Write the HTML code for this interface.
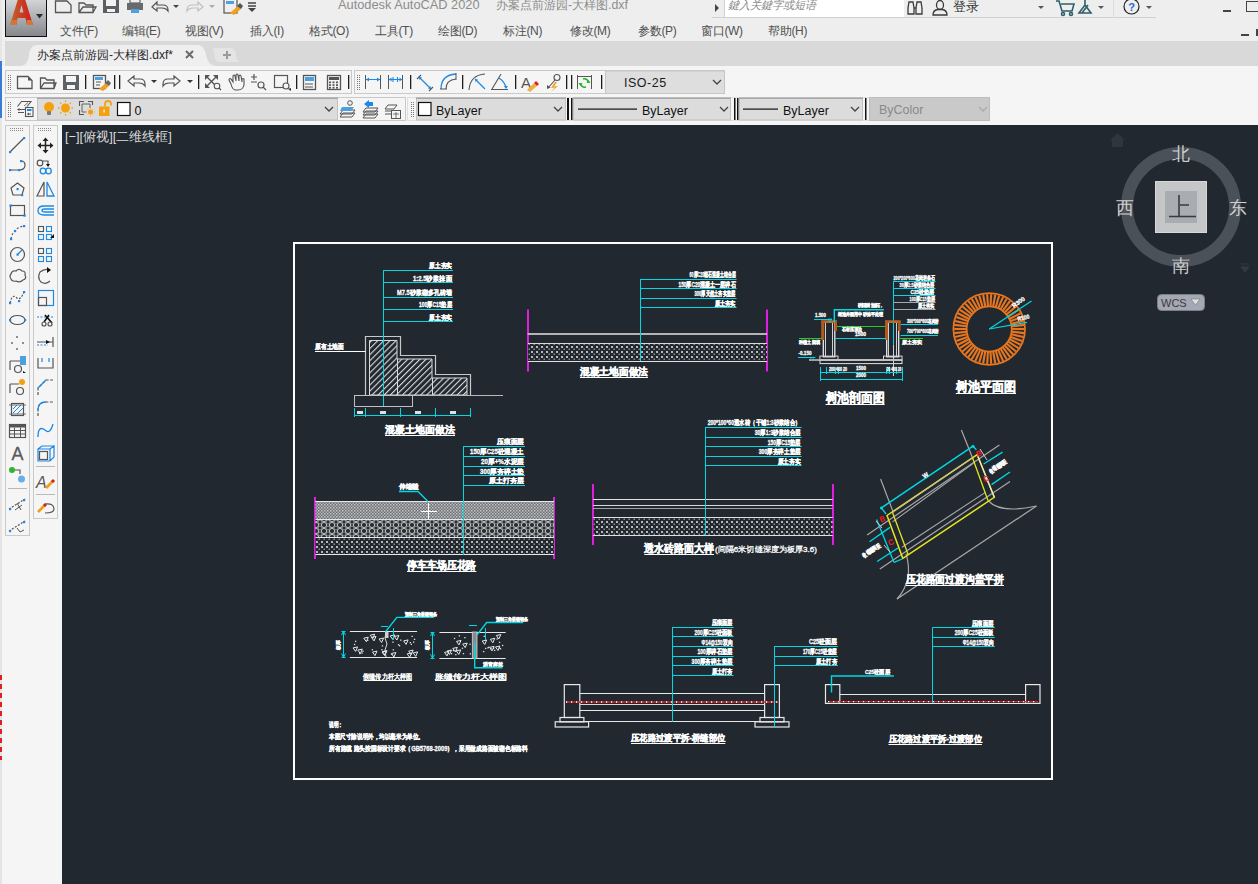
<!DOCTYPE html><html><head><meta charset="utf-8"><title>AutoCAD</title><style>

*{margin:0;padding:0;box-sizing:border-box}
html,body{width:1258px;height:884px;overflow:hidden;background:#f0f0f0;font-family:"Liberation Sans",sans-serif;}
.abs{position:absolute}
.t{position:absolute;white-space:nowrap;line-height:1}
.menu{position:absolute;top:24px;font-size:12px;letter-spacing:-0.3px;color:#505050;white-space:nowrap;line-height:14px}
.tb{position:absolute;background:#f5f5f5;border:1px solid #cfcfcf}
.sep{position:absolute;width:2px;background:#1e1e1e}
.combo{position:absolute;background:#dedede;border:1px solid #c4c4c4;border-top:2px solid #b4b4b4}

</style></head><body>
<div class="abs" style="left:0;top:0;width:1258px;height:41px;background:#eeeeee"></div>
<div class="abs" style="left:0;top:0;width:2px;height:884px;background:#e6e6e6"></div>
<div class="abs" style="left:0;top:61px;width:2px;height:57px;background:#3b7bd4"></div>
<div class="abs" style="left:5px;top:0;width:42px;height:37px;background:linear-gradient(#d2d4d6,#85878b);border:1.5px solid #111;border-top:none"></div>
<svg class="abs" style="left:0;top:0" width="50" height="37" viewBox="0 0 50 37">
<defs><linearGradient id="ag" x1="0" x2="1"><stop offset="0" stop-color="#c2682e"/><stop offset="0.55" stop-color="#c83a22"/><stop offset="1" stop-color="#d8181a"/></linearGradient></defs>
<path d="M10 25 L18 -1 L25 -1 L33 25 L27 25 L25.5 18 L17.5 18 L16.5 25 Z M19.5 12.5 L23.5 12.5 L21.5 5 Z" fill="url(#ag)" fill-rule="evenodd"/>
<path d="M10 25 L16.5 25 L17 20 L12 20Z M27 25 L33 25 L31.5 20 L26.5 20Z" fill="#d0783a"/>
<path d="M36 14 L43 14 L39.5 18.5 Z" fill="#2a2e33"/>
</svg>

<svg class="abs" style="left:50px;top:0" width="210" height="18" viewBox="0 0 210 18">
<g fill="none" stroke="#555" stroke-width="1.3">
<path d="M5.5 1 L17 1 L21 5 L21 12.5 L5.5 12.5 Z"/>
<path d="M29 3 L34 3 L36 5 L43 5 L43 12.5 L29 12.5 Z M29 12.5 L33 7 L46 7 L43 12.5"/>
</g>
<path d="M53 -1 L69 -1 L69 13 L53 13 Z" fill="#5a5e63"/>
<rect x="56" y="0" width="10" height="6" fill="#f0f0f0"/><rect x="57" y="9" width="8" height="3" fill="#f0f0f0"/>
<path d="M77 3 L93 3 L93 10 L77 10 Z" fill="#6a6a6a"/><rect x="80" y="-1" width="10" height="4" fill="none" stroke="#666" stroke-width="1.2"/>
<rect x="81" y="9" width="8" height="4" fill="#4da0e0"/>
<path d="M102 7 L107 2 L107 5 L113 5 Q118 5 118 10 L118 11 Q116 8 112 8 L107 8 L107 11 Z" fill="none" stroke="#555" stroke-width="1.2"/>
<path d="M123 5 L129 5 L126 8 Z" fill="#444"/>
<path d="M153 7 L148 2 L148 5 L142 5 Q137 5 137 10 L137 11 Q139 8 143 8 L148 8 L148 11 Z" fill="none" stroke="#c0c0c0" stroke-width="1.2"/>
<path d="M159 5 L165 5 L162 8 Z" fill="#aaa"/>
<rect x="174" y="-1" width="13" height="14" fill="none" stroke="#555" stroke-width="1.2"/><rect x="176" y="1" width="8" height="3" fill="#4da0e0"/>
<path d="M180 13 L188 6 L191 9 L184 15 Z" fill="#f0a020"/><path d="M187 6 L190 3 L193 6 L191 9Z" fill="#555"/>
<path d="M198 3 L206 3 M198 6 L206 6" stroke="#444" stroke-width="1.3"/><path d="M198 8 L206 8 L202 12 Z" fill="#444"/>
</svg>
<div class="t" style="left:338px;top:-1px;font-size:12.8px;color:#8c8c8c">Autodesk AutoCAD 2020</div>
<div class="t" style="left:496px;top:-1px;font-size:12.3px;color:#8c8c8c">办案点前游园-大样图.dxf</div>
<div class="abs" style="left:712px;top:17px;width:444px;height:1px;background:#d2d2d2"></div>
<svg class="abs" style="left:714px;top:3px" width="8" height="12"><path d="M1 1 L5 5 L1 9Z" fill="#444"/></svg>
<div class="abs" style="left:724px;top:-1px;width:180px;height:19px;background:#ffffff;border-left:1px solid #cfcfcf;border-bottom:1px solid #cfcfcf"></div>
<div class="t" style="left:728px;top:0px;font-size:11.2px;color:#8a8a8a;font-style:italic">鍵入关鍵字或短语</div>

<svg class="abs" style="left:905px;top:0" width="260" height="18" viewBox="0 0 260 18">
<g fill="none" stroke="#3a3a3a" stroke-width="1.3">
<path d="M4 2 L8 2 L9 8 L9 14 L3 14 L3 8 Z M12 2 L16 2 L17 8 L17 14 L11 14 L11 8 Z M9 8 L11 8"/>
<rect x="4" y="9" width="4" height="4" fill="#f0f0f0" stroke="none"/><rect x="12" y="9" width="4" height="4" fill="#f0f0f0" stroke="none"/>
<ellipse cx="35" cy="5" rx="3.5" ry="4.5"/><path d="M28 15 Q28 10 33 9.5 L37 9.5 Q42 10 42 15 Z"/>
</g>
<path d="M133 6 L139 6 L136 9Z" fill="#555"/>
<g fill="none" stroke="#2e5f6a" stroke-width="1.6"><path d="M151 1 L154 1 L157 11 L167 11 L169 4 L156 4"/><circle cx="158" cy="14" r="1.5"/><circle cx="166" cy="14" r="1.5"/></g>
<g fill="none" stroke="#2e5f6a" stroke-width="1.6"><path d="M180 -1 L180 5 L174 13 L186 13 L180 5 M177 13 L183 5"/></g>
<path d="M193 6 L199 6 L196 9Z" fill="#555"/>
<rect x="208" y="0" width="1" height="18" fill="#dcdcdc"/>
<circle cx="226.5" cy="6.5" r="7.5" fill="none" stroke="#222" stroke-width="1.2"/>
<text x="226.5" y="10.5" font-size="11" font-weight="bold" fill="#2a6ad0" text-anchor="middle" font-family="Liberation Sans">?</text>
<path d="M241 6 L247 6 L244 9Z" fill="#555"/>
</svg>
<div class="t" style="left:953px;top:0px;font-size:13px;color:#333">登录</div>
<div class="abs" style="left:1223px;top:10px;width:8px;height:2px;background:#444"></div>
<div class="abs" style="left:1246px;top:1px;width:14px;height:11px;border:1.3px solid #444"></div>
<div class="abs" style="left:1241px;top:34px;width:8px;height:2px;background:#444"></div>
<div class="abs" style="left:1256px;top:29px;width:2px;height:7px;background:#444"></div>
<div class="menu" style="left:60px">文件(F)</div>
<div class="menu" style="left:122px">编辑(E)</div>
<div class="menu" style="left:185px">视图(V)</div>
<div class="menu" style="left:250px">插入(I)</div>
<div class="menu" style="left:309px">格式(O)</div>
<div class="menu" style="left:375px">工具(T)</div>
<div class="menu" style="left:438px">绘图(D)</div>
<div class="menu" style="left:503px">标注(N)</div>
<div class="menu" style="left:570px">修改(M)</div>
<div class="menu" style="left:638px">参数(P)</div>
<div class="menu" style="left:701px">窗口(W)</div>
<div class="menu" style="left:768px">帮助(H)</div>
<div class="abs" style="left:5px;top:41px;width:1253px;height:25px;background:#d9d9d9"></div>
<svg class="abs" style="left:5px;top:41px" width="240" height="25" viewBox="0 0 240 25">
<path d="M16 25 Q23 24 24 14 Q25 4 32 4 L193 4 Q199 4 201 14 Q203 24 210 25 Z" fill="#efefef"/>
<path d="M208 7 L226 7 Q230 7 231 14 Q232 21 236 21 L214 21 Q210 21 209 14Z" fill="#e4e4e4"/>
<path d="M218 14 L226 14 M222 10 L222 18" stroke="#9a9a9a" stroke-width="2"/>
<path d="M181 10 L188 17 M188 10 L181 17" stroke="#6a6a6a" stroke-width="2"/>
</svg>
<div class="t" style="left:37px;top:49px;font-size:12px;color:#2a2a2a">办案点前游园-大样图.dxf*</div>
<div class="abs" style="left:0;top:66px;width:1258px;height:59px;background:#f5f5f5"></div>
<div class="abs" style="left:0;top:66px;width:2px;height:59px;background:#e6e6e6"></div>
<div class="abs" style="left:0;top:66px;width:2px;height:52px;background:#3b7bd4"></div>
<svg class="abs" style="left:0;top:0" width="1258" height="125" viewBox="0 0 1258 125"><rect x="5.5" y="70.5" width="346" height="23" fill="#f5f5f5" stroke="#c9c9c9"/><rect x="8" y="75" width="1" height="1" fill="#777"/><rect x="10" y="75" width="1" height="1" fill="#777"/><rect x="8" y="77" width="1" height="1" fill="#777"/><rect x="10" y="77" width="1" height="1" fill="#777"/><rect x="8" y="79" width="1" height="1" fill="#777"/><rect x="10" y="79" width="1" height="1" fill="#777"/><rect x="8" y="81" width="1" height="1" fill="#777"/><rect x="10" y="81" width="1" height="1" fill="#777"/><rect x="8" y="83" width="1" height="1" fill="#777"/><rect x="10" y="83" width="1" height="1" fill="#777"/><rect x="8" y="85" width="1" height="1" fill="#777"/><rect x="10" y="85" width="1" height="1" fill="#777"/><rect x="8" y="87" width="1" height="1" fill="#777"/><rect x="10" y="87" width="1" height="1" fill="#777"/><rect x="8" y="89" width="1" height="1" fill="#777"/><rect x="10" y="89" width="1" height="1" fill="#777"/><path d="M17.5 76.5 L28 76.5 L32 80.5 L32 88.5 L17.5 88.5 Z" fill="none" stroke="#555" stroke-width="1.3"/><path d="M28 76.5 L32 80.5 L28 80.5Z" fill="#555"/><path d="M40.5 78 L45 78 L47 80 L54 80 L54 88.5 L40.5 88.5Z M40.5 88.5 L44 83 L56 83 L54 88.5" fill="none" stroke="#555" stroke-width="1.3"/><rect x="63" y="75" width="16" height="15" fill="#5e6166"/><rect x="66" y="76" width="10" height="6" fill="#f5f5f5"/><rect x="67" y="85" width="8" height="4" fill="#f5f5f5"/><rect x="85" y="75" width="1.3" height="14" fill="#1e1e1e"/><rect x="93.5" y="75.5" width="12" height="13" fill="none" stroke="#555" stroke-width="1.3"/><rect x="95" y="77" width="8" height="3" fill="#4da0e0"/><path d="M96 82 L101 82 M96 85 L100 85" stroke="#555"/><path d="M99 89 L106 83 L109 86 L103 91Z" fill="#f0a020"/><path d="M105 83 L108 80 L111 83 L109 86Z" fill="#666"/><rect x="114" y="75" width="1.3" height="14" fill="#1e1e1e"/><rect x="119" y="75" width="1.3" height="14" fill="#1e1e1e"/><path d="M128 81 L134 76 L134 79 L140 79 Q145 79 145 84 L145 86 Q143 83 139 83 L134 83 L134 86 Z" fill="none" stroke="#555" stroke-width="1.2"/><path d="M151 80 L157 80 L154 83Z" fill="#333"/><path d="M180 81 L174 76 L174 79 L168 79 Q163 79 163 84 L163 86 Q165 83 169 83 L174 83 L174 86 Z" fill="none" stroke="#555" stroke-width="1.2"/><path d="M187 80 L193 80 L190 83Z" fill="#333"/><rect x="198" y="75" width="1.3" height="14" fill="#1e1e1e"/><path d="M206 76 L217 87 M217 76 L206 87" stroke="#555" stroke-width="1.4"/><path d="M205 75 L210 75 L205 80Z M218 75 L213 75 L218 80Z M205 88 L210 88 L205 83Z" fill="#555"/><circle cx="217" cy="86" r="2.8" fill="#f5f5f5" stroke="#555" stroke-width="1.1"/><path d="M219 88 L221 90" stroke="#555" stroke-width="1.3"/><path d="M231 84 L229 80 Q229 78 231 79 L233 82 L233 76 Q234 74 235 76 L236 81 L236 75 Q237 73 238 75 L239 81 L239 76 Q240 74 241 76 L242 82 L242 79 Q243 78 244 79 L244 85 Q243 90 238 90 L235 90 Q232 89 231 84Z" fill="none" stroke="#555" stroke-width="1.1"/><path d="M251 77 L257 77 M254 74 L254 80 M251 82 L257 82" stroke="#555" stroke-width="1.2"/><circle cx="261" cy="85" r="3" fill="none" stroke="#555" stroke-width="1.2"/><path d="M263 87 L266 90" stroke="#555" stroke-width="1.3"/><rect x="274.5" y="75.5" width="13" height="12" fill="none" stroke="#555" stroke-width="1.2"/><circle cx="286" cy="86" r="3" fill="#f5f5f5" stroke="#555" stroke-width="1.1"/><path d="M288 89 L291 91 L291 88Z" fill="#333"/><rect x="296" y="75" width="1.3" height="14" fill="#1e1e1e"/><rect x="303.5" y="75.5" width="12" height="14" fill="none" stroke="#555" stroke-width="1.3"/><rect x="305" y="77" width="9" height="4" fill="#4da0e0"/><path d="M305 84 L313 84 M305 87 L313 87" stroke="#555"/><rect x="327.5" y="75.5" width="13" height="14" fill="none" stroke="#555" stroke-width="1.3"/><rect x="329" y="77" width="10" height="3" fill="#555"/><rect x="329.0" y="81.5" width="2" height="1.7" fill="#555"/><rect x="329.0" y="84.2" width="2" height="1.7" fill="#555"/><rect x="329.0" y="86.9" width="2" height="1.7" fill="#555"/><rect x="332.5" y="81.5" width="2" height="1.7" fill="#555"/><rect x="332.5" y="84.2" width="2" height="1.7" fill="#555"/><rect x="332.5" y="86.9" width="2" height="1.7" fill="#555"/><rect x="336.0" y="81.5" width="2" height="1.7" fill="#555"/><rect x="336.0" y="84.2" width="2" height="1.7" fill="#555"/><rect x="336.0" y="86.9" width="2" height="1.7" fill="#555"/><rect x="348" y="75" width="1.3" height="14" fill="#1e1e1e"/><rect x="354.5" y="70.5" width="370" height="23" fill="#f5f5f5" stroke="#c9c9c9"/><rect x="357" y="75" width="1" height="1" fill="#777"/><rect x="359" y="75" width="1" height="1" fill="#777"/><rect x="357" y="77" width="1" height="1" fill="#777"/><rect x="359" y="77" width="1" height="1" fill="#777"/><rect x="357" y="79" width="1" height="1" fill="#777"/><rect x="359" y="79" width="1" height="1" fill="#777"/><rect x="357" y="81" width="1" height="1" fill="#777"/><rect x="359" y="81" width="1" height="1" fill="#777"/><rect x="357" y="83" width="1" height="1" fill="#777"/><rect x="359" y="83" width="1" height="1" fill="#777"/><rect x="357" y="85" width="1" height="1" fill="#777"/><rect x="359" y="85" width="1" height="1" fill="#777"/><rect x="357" y="87" width="1" height="1" fill="#777"/><rect x="359" y="87" width="1" height="1" fill="#777"/><rect x="357" y="89" width="1" height="1" fill="#777"/><rect x="359" y="89" width="1" height="1" fill="#777"/><path d="M365.5 75 L365.5 89 M380.5 75 L380.5 89 M388.5 75 L388.5 89 M402.5 75 L402.5 89" stroke="#555" stroke-width="1"/><path d="M366 79.5 L380 79.5 M389 79.5 L402 79.5 M393 77 L393 82 M397.5 77 L397.5 82" stroke="#1e88e5" stroke-width="1.1"/><path d="M366 79.5 L369 77.5 L369 81.5Z M380 79.5 L377 77.5 L377 81.5Z M389 79.5 L391.5 77.5 L391.5 81.5Z M402 79.5 L399.5 77.5 L399.5 81.5Z" fill="#1e88e5"/><rect x="410" y="75" width="1.3" height="14" fill="#1e1e1e"/><path d="M419 77 L431 89" stroke="#1e88e5" stroke-width="1.2"/><path d="M417 79 L421 75 M429 91 L433 87" stroke="#555" stroke-width="1.1"/><path d="M419 77 L422 77.5 L419.5 80Z M431 89 L428 88.5 L430.5 86Z" fill="#1e88e5"/><path d="M441 89 Q441 75 456 74" fill="none" stroke="#1e88e5" stroke-width="1.3"/><path d="M446 89 Q446 80 456 79" fill="none" stroke="#555" stroke-width="1.1"/><path d="M440 89 L447 89 M456 73 L456 80" stroke="#555" stroke-width="1"/><rect x="462" y="75" width="1.3" height="14" fill="#1e1e1e"/><path d="M469 90 Q470 75 485 74" fill="none" stroke="#555" stroke-width="1.1"/><path d="M475 79 L485 89" stroke="#1e88e5" stroke-width="1.2"/><path d="M475 79 L478 79.5 L475.5 82Z" fill="#1e88e5"/><path d="M491 89.5 L508 89.5 M492 89 L501 74" fill="none" stroke="#555" stroke-width="1.1"/><path d="M499 78 Q505 82 506 88" fill="none" stroke="#1e88e5" stroke-width="1.3"/><path d="M506 89 L504 86 L508 86Z" fill="#1e88e5"/><rect x="515" y="75" width="1.3" height="14" fill="#1e1e1e"/><text x="521" y="88" font-size="15" font-family="Liberation Sans" fill="#555">A</text><path d="M527 90 L534 83 L537 86 L530 92Z" fill="#f0b040"/><path d="M534 83 L536 81 L539 84 L537 86Z" fill="#e02020"/><circle cx="557" cy="77.5" r="3" fill="none" stroke="#555" stroke-width="1.1"/><path d="M555 80 L548 88" stroke="#555" stroke-width="1.1"/><path d="M547 89 L547 85 L550.5 87.5Z" fill="#555"/><path d="M555 82 L551 88 L555 87.5 L551 92 L558 86 L554 86.5 L557 82Z" fill="#f0a020"/><rect x="566" y="75" width="1.3" height="14" fill="#1e1e1e"/><rect x="571" y="75" width="1.3" height="14" fill="#1e1e1e"/><path d="M577.5 75 L577.5 89 M591.5 75 L591.5 89 M578 76.5 L591 76.5" stroke="#555" stroke-width="1" fill="none"/><path d="M580.5 84 Q582 88 586 87 M588.5 82 Q587 78 583 79" stroke="#2ab52a" stroke-width="1.6" fill="none"/><path d="M578.5 83 L582.5 83 L580.5 86Z M590.5 83 L586.5 83 L588.5 80Z" fill="#2ab52a"/><rect x="601" y="75" width="1.3" height="14" fill="#1e1e1e"/><rect x="605.5" y="71" width="119" height="22.5" fill="#dedede" stroke="#c6c6c6"/><text x="624" y="87" font-size="12.5" font-family="Liberation Sans" fill="#1a1a1a" letter-spacing="0.5">ISO-25</text><path d="M713 80 L717 84 L721 80" fill="none" stroke="#444" stroke-width="1.3"/><rect x="5.5" y="97.5" width="400" height="23" fill="#f5f5f5" stroke="#c9c9c9"/><rect x="8" y="102" width="1" height="1" fill="#777"/><rect x="10" y="102" width="1" height="1" fill="#777"/><rect x="8" y="104" width="1" height="1" fill="#777"/><rect x="10" y="104" width="1" height="1" fill="#777"/><rect x="8" y="106" width="1" height="1" fill="#777"/><rect x="10" y="106" width="1" height="1" fill="#777"/><rect x="8" y="108" width="1" height="1" fill="#777"/><rect x="10" y="108" width="1" height="1" fill="#777"/><rect x="8" y="110" width="1" height="1" fill="#777"/><rect x="10" y="110" width="1" height="1" fill="#777"/><rect x="8" y="112" width="1" height="1" fill="#777"/><rect x="10" y="112" width="1" height="1" fill="#777"/><rect x="8" y="114" width="1" height="1" fill="#777"/><rect x="10" y="114" width="1" height="1" fill="#777"/><rect x="8" y="116" width="1" height="1" fill="#777"/><rect x="10" y="116" width="1" height="1" fill="#777"/><path d="M17.5 106.5 L21.5 101.5 L31 101.5 L27 106.5" fill="none" stroke="#555" stroke-width="1.1"/><path d="M24 106 L28 102.5" stroke="#555" stroke-width="0.8"/><path d="M18 109.5 L25 109.5 M18 112.5 L24 112.5" stroke="#555" stroke-width="1.1"/><path d="M17 109.5 L19.5 108 L19.5 111Z" fill="#555"/><rect x="25.5" y="107.5" width="7.5" height="9" fill="#f5f5f5" stroke="#555" stroke-width="1.1"/><rect x="27" y="109" width="4.5" height="2" fill="#1e88e5"/><path d="M27.5 114 L31 114" stroke="#555" stroke-width="1"/><path d="M27 114 L29 112.5 L29 115.5Z" fill="#555"/><rect x="37.5" y="98" width="300" height="22" fill="#dcdcdc" stroke="#c2c2c2"/><rect x="37" y="97.5" width="301" height="1.5" fill="#a8a8a8"/><circle cx="49" cy="107" r="5" fill="#f5a10f"/><rect x="47" y="111" width="4" height="4" rx="1" fill="#777"/><circle cx="65.5" cy="108" r="4.5" fill="#f5a10f"/><path d="M71.5 108.0 L73.0 108.0" stroke="#f5a10f" stroke-width="1.3"/><path d="M69.7 112.2 L70.8 113.3" stroke="#f5a10f" stroke-width="1.3"/><path d="M65.5 114.0 L65.5 115.5" stroke="#f5a10f" stroke-width="1.3"/><path d="M61.3 112.2 L60.2 113.3" stroke="#f5a10f" stroke-width="1.3"/><path d="M59.5 108.0 L58.0 108.0" stroke="#f5a10f" stroke-width="1.3"/><path d="M61.3 103.8 L60.2 102.7" stroke="#f5a10f" stroke-width="1.3"/><path d="M65.5 102.0 L65.5 100.5" stroke="#f5a10f" stroke-width="1.3"/><path d="M69.7 103.8 L70.8 102.7" stroke="#f5a10f" stroke-width="1.3"/><path d="M79.5 106 L79.5 101.5 L84 101.5 M88 101.5 L92.5 101.5 L92.5 105 M79.5 110 L79.5 114.5 L84 114.5" fill="none" stroke="#555" stroke-width="1.1"/><path d="M82 104 L90 104 L90 108 M82 104 L82 112 L86 112" fill="none" stroke="#555" stroke-width="0.9"/><circle cx="90.5" cy="112" r="2.5" fill="#f5a10f"/><path d="M90.5 107.5 L90.5 108.5 M90.5 115.5 L90.5 116.5 M86 112 L87 112 M94 112 L95 112 M87.5 109 L88 109.5 M93.5 109 L93 109.5 M87.5 115 L88 114.5 M93.5 115 L93 114.5" stroke="#f5a10f" stroke-width="1"/><rect x="99" y="106.5" width="10.5" height="9.5" fill="#f5a10f"/><path d="M105 106.5 L105 104 Q105 101 108 101 Q111 101 111 104 L111 105.5" fill="none" stroke="#f5a10f" stroke-width="1.8"/><rect x="103.5" y="109.5" width="1.2" height="3" fill="#fff"/><rect x="117.5" y="102.5" width="12.5" height="13" fill="#fff" stroke="#111" stroke-width="1.2"/><text x="134.5" y="114.5" font-size="12.5" font-family="Liberation Sans" fill="#111">0</text><path d="M325 107 L329 111 L333 107" fill="none" stroke="#444" stroke-width="1.3"/><path d="M343 113 L355 113 L352 117 L340 117Z M343 110 L355 110 L352 114 L340 114Z" fill="#f5f5f5" stroke="#555" stroke-width="1"/><path d="M342 107 L354 107 L351 111 L340 111Z" fill="#4da0e0"/><circle cx="350" cy="103" r="2.3" fill="#f5f5f5" stroke="#555"/><path d="M366 114 L378 114 L375 118 L363 118Z M366 111 L378 111 L375 115 L363 115Z M366 108 L378 108 L375 112 L363 112Z" fill="#f5f5f5" stroke="#555" stroke-width="1"/><path d="M364 104 L369 100 L369 102 L373 102 L373 106 L369 106 L369 108Z" fill="#1e88e5"/><path d="M388 105 L397 105 L394 109 L385 109Z" fill="none" stroke="#555"/><path d="M385 111 L391 111 M385 114 L391 114" stroke="#555"/><rect x="391.5" y="110.5" width="9" height="8" fill="#f5f5f5" stroke="#555"/><path d="M393 114 L399 114 M396 112 L396 118" stroke="#555" stroke-width="0.8"/><rect x="407.5" y="97.5" width="582" height="23" fill="#f5f5f5" stroke="#e0e0e0"/><rect x="411" y="102" width="1" height="1" fill="#777"/><rect x="413" y="102" width="1" height="1" fill="#777"/><rect x="411" y="104" width="1" height="1" fill="#777"/><rect x="413" y="104" width="1" height="1" fill="#777"/><rect x="411" y="106" width="1" height="1" fill="#777"/><rect x="413" y="106" width="1" height="1" fill="#777"/><rect x="411" y="108" width="1" height="1" fill="#777"/><rect x="413" y="108" width="1" height="1" fill="#777"/><rect x="411" y="110" width="1" height="1" fill="#777"/><rect x="413" y="110" width="1" height="1" fill="#777"/><rect x="411" y="112" width="1" height="1" fill="#777"/><rect x="413" y="112" width="1" height="1" fill="#777"/><rect x="411" y="114" width="1" height="1" fill="#777"/><rect x="413" y="114" width="1" height="1" fill="#777"/><rect x="411" y="116" width="1" height="1" fill="#777"/><rect x="413" y="116" width="1" height="1" fill="#777"/><rect x="416.5" y="98" width="149" height="22" fill="#dcdcdc" stroke="#c2c2c2"/><rect x="416" y="97.5" width="150" height="1.5" fill="#a8a8a8"/><rect x="418.5" y="102.5" width="12.5" height="13" fill="#fff" stroke="#111" stroke-width="1.2"/><text x="436" y="114.5" font-size="12.5" font-family="Liberation Sans" fill="#111">ByLayer</text><path d="M554 107 L558 111 L562 107" fill="none" stroke="#444" stroke-width="1.3"/><rect x="567" y="98" width="2" height="22" fill="#111"/><rect x="571" y="98" width="1.5" height="22" fill="#111"/><rect x="573.5" y="98" width="157" height="22" fill="#dcdcdc" stroke="#c2c2c2"/><rect x="573" y="97.5" width="158" height="1.5" fill="#a8a8a8"/><rect x="578" y="108.5" width="59" height="1.2" fill="#111"/><text x="642" y="114.5" font-size="12.5" font-family="Liberation Sans" fill="#111">ByLayer</text><path d="M720 107 L724 111 L728 107" fill="none" stroke="#444" stroke-width="1.3"/><rect x="734" y="98" width="1.5" height="22" fill="#111"/><rect x="737" y="98" width="1.5" height="22" fill="#111"/><rect x="739.5" y="98" width="123" height="22" fill="#dcdcdc" stroke="#c2c2c2"/><rect x="739" y="97.5" width="124" height="1.5" fill="#a8a8a8"/><rect x="743" y="108.5" width="35" height="1.2" fill="#111"/><text x="783" y="114.5" font-size="12.5" font-family="Liberation Sans" fill="#111">ByLayer</text><path d="M851 107 L855 111 L859 107" fill="none" stroke="#444" stroke-width="1.3"/><rect x="865" y="98" width="1.5" height="22" fill="#111"/><rect x="869.5" y="97.5" width="120" height="23" fill="#c9c9c9" stroke="#bdbdbd"/><text x="879" y="114" font-size="12.5" font-family="Liberation Sans" fill="#8a8a8a">ByColor</text><path d="M979 107 L983 111 L987 107" fill="none" stroke="#aaa" stroke-width="1.3"/></svg>
<div class="abs" style="left:0;top:125px;width:62px;height:759px;background:#f5f5f5"></div>
<div class="abs" style="left:0;top:125px;width:2px;height:759px;background:#e4e4e4"></div>
<svg class="abs" style="left:0;top:120px" width="62" height="430" viewBox="0 120 62 430"><rect x="5.5" y="125.5" width="24" height="410" fill="#f5f5f5" stroke="#c9c9c9"/><rect x="33.5" y="125.5" width="24" height="393" fill="#f5f5f5" stroke="#c9c9c9"/><rect x="10" y="128" width="1" height="1" fill="#888"/><rect x="38" y="128" width="1" height="1" fill="#888"/><rect x="10" y="130" width="1" height="1" fill="#888"/><rect x="38" y="130" width="1" height="1" fill="#888"/><rect x="12" y="128" width="1" height="1" fill="#888"/><rect x="40" y="128" width="1" height="1" fill="#888"/><rect x="12" y="130" width="1" height="1" fill="#888"/><rect x="40" y="130" width="1" height="1" fill="#888"/><rect x="14" y="128" width="1" height="1" fill="#888"/><rect x="42" y="128" width="1" height="1" fill="#888"/><rect x="14" y="130" width="1" height="1" fill="#888"/><rect x="42" y="130" width="1" height="1" fill="#888"/><rect x="16" y="128" width="1" height="1" fill="#888"/><rect x="44" y="128" width="1" height="1" fill="#888"/><rect x="16" y="130" width="1" height="1" fill="#888"/><rect x="44" y="130" width="1" height="1" fill="#888"/><rect x="18" y="128" width="1" height="1" fill="#888"/><rect x="46" y="128" width="1" height="1" fill="#888"/><rect x="18" y="130" width="1" height="1" fill="#888"/><rect x="46" y="130" width="1" height="1" fill="#888"/><rect x="20" y="128" width="1" height="1" fill="#888"/><rect x="48" y="128" width="1" height="1" fill="#888"/><rect x="20" y="130" width="1" height="1" fill="#888"/><rect x="48" y="130" width="1" height="1" fill="#888"/><rect x="22" y="128" width="1" height="1" fill="#888"/><rect x="50" y="128" width="1" height="1" fill="#888"/><rect x="22" y="130" width="1" height="1" fill="#888"/><rect x="50" y="130" width="1" height="1" fill="#888"/><path d="M10 152 L24 138" fill="none" stroke="#555" stroke-width="1.2"/><rect x="9" y="151" width="2.2" height="2.2" fill="#1e88e5"/><rect x="23" y="137" width="2.2" height="2.2" fill="#1e88e5"/><path d="M10 170 L19 170 Q25 170 25 165 Q25 161 21 161" fill="none" stroke="#555" stroke-width="1.2"/><rect x="9" y="169" width="2.2" height="2.2" fill="#1e88e5"/><rect x="18" y="169" width="2.2" height="2.2" fill="#1e88e5"/><rect x="20" y="160" width="2.2" height="2.2" fill="#1e88e5"/><path d="M17.5 183 L24 188 L22 195 L13 195 L11 188Z" fill="none" stroke="#555" stroke-width="1.2"/><rect x="16.5" y="188" width="2.2" height="2.2" fill="#1e88e5"/><rect x="21" y="194" width="2.2" height="2.2" fill="#1e88e5"/><rect x="10.5" y="205.5" width="14" height="10" fill="none" stroke="#555" stroke-width="1.2"/><rect x="9.5" y="204.5" width="2.2" height="2.2" fill="#1e88e5"/><rect x="23.5" y="214.5" width="2.2" height="2.2" fill="#1e88e5"/><path d="M11 239 Q13 228 24 226" fill="none" stroke="#555" stroke-width="1.2" stroke-dasharray="2 2"/><rect x="10" y="238" width="2.2" height="2.2" fill="#1e88e5"/><rect x="23" y="225" width="2.2" height="2.2" fill="#1e88e5"/><rect x="14" y="230" width="2.2" height="2.2" fill="#1e88e5"/><circle cx="17.5" cy="254.5" r="7" fill="none" stroke="#555" stroke-width="1.2"/><rect x="16.5" y="253.5" width="2.2" height="2.2" fill="#1e88e5"/><path d="M17.5 254.5 L22 250" stroke="#1e88e5" stroke-width="1.2"/><path d="M11 279 Q9 276 11 274 Q12 270 16 271 Q19 268 22 271 Q26 271 25 275 Q27 279 23 280 Q20 283 16 281 Q12 282 11 279Z" fill="none" stroke="#555" stroke-width="1.2"/><path d="M10 303 Q12 294 16 297 Q19 301 22 296 L24 292" fill="none" stroke="#555" stroke-width="1.2" stroke-dasharray="2 1.5"/><rect x="9" y="302" width="2.2" height="2.2" fill="#1e88e5"/><rect x="23" y="291" width="2.2" height="2.2" fill="#1e88e5"/><rect x="18" y="300" width="2.2" height="2.2" fill="#1e88e5"/><ellipse cx="17.5" cy="320" rx="7.5" ry="4.5" fill="none" stroke="#555" stroke-width="1.2"/><rect x="9" y="319" width="2.2" height="2.2" fill="#1e88e5"/><rect x="24" y="319" width="2.2" height="2.2" fill="#1e88e5"/><rect x="16.2" y="336.2" width="1.6" height="1.6" fill="#555"/><rect x="11.2" y="342.2" width="1.6" height="1.6" fill="#555"/><rect x="22.2" y="342.2" width="1.6" height="1.6" fill="#555"/><rect x="16.2" y="348.2" width="1.6" height="1.6" fill="#555"/><path d="M10 361 L20 361 M10 361 L10 370" fill="none" stroke="#555" stroke-width="1.2"/><rect x="20" y="356" width="6" height="9" fill="#4da0e0"/><circle cx="18" cy="369" r="3.5" fill="none" stroke="#555" stroke-width="1.2"/><path d="M23 371 L26 373 L23 373Z" fill="#111"/><path d="M10 384 L19 384 M10 384 L10 393" fill="none" stroke="#555" stroke-width="1.2"/><circle cx="20" cy="391" r="3.5" fill="none" stroke="#555" stroke-width="1.2"/><circle cx="22" cy="382" r="3" fill="#f5a10f"/><rect x="11.5" y="403.5" width="12" height="12" fill="none" stroke="#555" stroke-width="1.2"/><path d="M13 413 L21 405 M13 409 L17 405 M17 414 L23 408" stroke="#1e88e5" stroke-width="1"/><path d="M9 405 L26 405 M9 414 L26 414" stroke="#555" stroke-width="0.8"/><rect x="9.5" y="424.5" width="16" height="13" fill="none" stroke="#555" stroke-width="1.2"/><rect x="9.5" y="424.5" width="16" height="3" fill="#555"/><path d="M9.5 430.5 L25.5 430.5 M9.5 434 L25.5 434 M14.5 427.5 L14.5 437.5 M20.5 427.5 L20.5 437.5" stroke="#555" stroke-width="1"/><text x="17.5" y="460" font-size="18" font-family="Liberation Sans" fill="#5a5a5a" stroke="#5a5a5a" stroke-width="0.3" text-anchor="middle">A</text><circle cx="12" cy="470" r="3" fill="#2db52d"/><path d="M15 470 L20 470 L20 474" fill="none" stroke="#555" stroke-width="1.2"/><circle cx="21.5" cy="479" r="3.5" fill="#6aaee8"/><rect x="8" y="488" width="19" height="0.8" fill="#aaa"/><path d="M9 509 L25 499" fill="none" stroke="#555" stroke-width="1.2" stroke-dasharray="2 1.5"/><path d="M15 510 L22 505 M17 503 L21 510" stroke="#555" stroke-width="1"/><rect x="9" y="508" width="2.2" height="2.2" fill="#1e88e5"/><rect x="23" y="499" width="2.2" height="2.2" fill="#1e88e5"/><path d="M9 531 L25 521" fill="none" stroke="#555" stroke-width="1.2" stroke-dasharray="2 1.5"/><path d="M17 528 L20 532 L24 530" stroke="#555" stroke-width="1" fill="none"/><rect x="9" y="530" width="2.2" height="2.2" fill="#1e88e5"/><rect x="23" y="521" width="2.2" height="2.2" fill="#1e88e5"/><path d="M45.5 139 L45.5 152 M39 145.5 L52 145.5" stroke="#222" stroke-width="1.5"/><path d="M45.5 137.5 L42.5 141 L48.5 141Z M45.5 153.5 L42.5 150 L48.5 150Z M37.5 145.5 L41 142.5 L41 148.5Z M53.5 145.5 L50 142.5 L50 148.5Z" fill="#222"/><circle cx="40" cy="163" r="2.8" fill="none" stroke="#555" stroke-width="1.2"/><path d="M43 161 L48 161 L48 165" fill="none" stroke="#555" stroke-width="1.2"/><path d="M46 164 L48 167 L50 164Z" fill="#111"/><circle cx="43" cy="171" r="2.8" fill="none" stroke="#1e88e5" stroke-width="1.3"/><circle cx="48.5" cy="171" r="2.8" fill="none" stroke="#1e88e5" stroke-width="1.3"/><path d="M37 196 L44 182 L44 196Z" fill="none" stroke="#555" stroke-width="1.2"/><path d="M47 196 L47 182 L54 196Z" fill="none" stroke="#1e88e5" stroke-width="1.3"/><path d="M54 206 L44 206 Q38 206 38 210.5 Q38 215 44 215 L54 215 M54 209 L45 209 Q42 209 42 210.5 Q42 212 45 212 L54 212" fill="none" stroke="#1e88e5" stroke-width="1.3"/><rect x="38.5" y="226.5" width="5" height="5" fill="none" stroke="#555" stroke-width="1.1"/><rect x="38.5" y="248.5" width="5" height="5" fill="none" stroke="#555" stroke-width="1.1"/><rect x="38.5" y="234.5" width="5" height="5" fill="none" stroke="#1e88e5" stroke-width="1.1"/><rect x="38.5" y="256.5" width="5" height="5" fill="none" stroke="#1e88e5" stroke-width="1.1"/><rect x="46.5" y="226.5" width="5" height="5" fill="none" stroke="#1e88e5" stroke-width="1.1"/><rect x="46.5" y="248.5" width="5" height="5" fill="none" stroke="#1e88e5" stroke-width="1.1"/><rect x="46.5" y="234.5" width="5" height="5" fill="none" stroke="#1e88e5" stroke-width="1.1"/><rect x="46.5" y="256.5" width="5" height="5" fill="none" stroke="#1e88e5" stroke-width="1.1"/><path d="M50 238 L54 238 L54 234Z" fill="#111"/><path d="M50 270 Q45 268 40 272 Q37 278 41 282 Q46 285 50 281" fill="none" stroke="#555" stroke-width="1.2"/><path d="M47 267 L51 270 L47 273Z" fill="#111"/><rect x="38.5" y="290.5" width="15" height="15" fill="none" stroke="#1e88e5" stroke-width="1.2"/><rect x="38.5" y="297.5" width="8" height="8" fill="none" stroke="#555" stroke-width="1.2"/><path d="M37 317 L54 317" stroke="#1e88e5" stroke-width="1" stroke-dasharray="2 1.5"/><path d="M45 315 L52 323 M49 315 L44 322" stroke="#111" stroke-width="1.6"/><circle cx="44" cy="324" r="2" fill="none" stroke="#555" stroke-width="1.2"/><circle cx="50" cy="324" r="2" fill="none" stroke="#555" stroke-width="1.2"/><path d="M37 342 L53 342 M53 337 L53 347" fill="none" stroke="#555" stroke-width="1.2"/><path d="M37 345 L48 345" stroke="#1e88e5" stroke-width="1" stroke-dasharray="2 1.5"/><path d="M50 342 L46 340 L46 344Z" fill="#111"/><path d="M38 358 L38 368 L53 368 L53 358" fill="none" stroke="#555" stroke-width="1.2"/><path d="M42 358 L42 362 M49 358 L49 362" stroke="#1e88e5" stroke-width="1.2"/><path d="M38 395 L38 388 L46 380 L53 380" fill="none" stroke="#555" stroke-width="1.2" stroke-dasharray="3 1.5"/><path d="M38 388 L46 380" stroke="#1e88e5" stroke-width="1.3"/><path d="M38 416 L38 410 Q38 402 46 402 L53 402" fill="none" stroke="#555" stroke-width="1.2" stroke-dasharray="3 1.5"/><path d="M38 410 Q38 402 46 402" stroke="#1e88e5" stroke-width="1.3" fill="none"/><path d="M38 437 Q38 425 45 430 Q50 435 53 424" fill="none" stroke="#1e88e5" stroke-width="1.3"/><path d="M38 449 L50 449 L54 446 L54 457 L50 461 L38 461Z M38 449 L42 446 L54 446 M50 449 L50 461" fill="none" stroke="#1e88e5" stroke-width="1.2"/><rect x="39.5" y="451.5" width="8" height="8" fill="none" stroke="#555" stroke-width="1.2"/><rect x="36" y="466" width="19" height="0.8" fill="#aaa"/><text x="36" y="488" font-size="16" font-family="Liberation Sans" font-style="italic" fill="#555">A</text><path d="M45 487 L52 480 L54 482 L47 489Z" fill="#f0a020"/><path d="M51 481 L53 479 L55 481 L53 483Z" fill="#d02020"/><rect x="36" y="494" width="19" height="0.8" fill="#aaa"/><path d="M45 504 Q54 503 54 509 Q54 513 45 513" fill="none" stroke="#555" stroke-width="1.2"/><path d="M37 511 L44 504 L46 506 L39 513Z" fill="#f0a020"/><path d="M43 505 L45 503 L47 505 L45 507Z" fill="#d02020"/></svg>
<div class="abs" style="left:0;top:675px;width:1.5px;height:85px;background:repeating-linear-gradient(#e02020 0 5px,transparent 5px 9px)"></div>
<div class="abs" style="left:62px;top:125px;width:1196px;height:759px;background:#212830"></div>
<div class="t" style="left:65px;top:131px;font-size:12.8px;color:#dcdcdc">[−][俯视][二维线框]</div>
<svg class="abs" style="left:0;top:0" width="1258" height="884" viewBox="0 0 1258 884"><defs>
<pattern id="diag" width="4.3" height="4.3" patternUnits="userSpaceOnUse" patternTransform="rotate(45)"><rect width="4.3" height="4.3" fill="#212830"/><rect x="0" y="0" width="1.1" height="4.3" fill="#dcdcdc"/></pattern>
<pattern id="dots" width="5" height="5" patternUnits="userSpaceOnUse"><rect width="5" height="5" fill="#212830"/><rect x="1" y="1" width="2" height="2" fill="#b8b8b8"/><rect x="3.5" y="3.5" width="1.5" height="1.5" fill="#8a8a8a"/></pattern>
<pattern id="cross" width="3" height="3" patternUnits="userSpaceOnUse"><rect width="3" height="3" fill="#6a6e74"/><rect x="0" y="0" width="1.5" height="1.5" fill="#cacaca"/><rect x="1.5" y="1.5" width="1.5" height="1.5" fill="#b0b0b0"/></pattern>
<pattern id="circ" width="8" height="6" patternUnits="userSpaceOnUse"><rect width="8" height="6" fill="#262c34"/><circle cx="4" cy="3" r="2.6" fill="none" stroke="#c0c0c0" stroke-width="1"/><circle cx="0" cy="0" r="2" fill="none" stroke="#a8a8a8" stroke-width="0.8"/><circle cx="8" cy="0" r="2" fill="none" stroke="#a8a8a8" stroke-width="0.8"/><circle cx="0" cy="6" r="2" fill="none" stroke="#a8a8a8" stroke-width="0.8"/><circle cx="8" cy="6" r="2" fill="none" stroke="#a8a8a8" stroke-width="0.8"/></pattern>
</defs><rect x="294" y="243" width="758" height="536" fill="none" stroke="#ffffff" stroke-width="2"/><polyline points="365.5,395.0 365.5,336.5 400.5,336.5 400.5,355.5 435.5,355.5 435.5,374.5 470.5,374.5 470.5,395.0" stroke="#c8c8c8" stroke-width="1.2" fill="none"/><path d="M369.5 395 L369.5 340.5 L397 340.5 L397 359 L432 359 L432 378 L467 378 L467 395 Z" fill="url(#diag)" stroke="#d8d8d8" stroke-width="1"/><path d="M397.5 359.0 L397.5 395.0" stroke="#d8d8d8" stroke-width="1" fill="none"/><path d="M432.5 378.0 L432.5 395.0" stroke="#d8d8d8" stroke-width="1" fill="none"/><path d="M383.5 270.0 L383.5 407.0" stroke="#00d8e4" stroke-width="1" fill="none"/><path d="M383.5 270.5 L453.0 270.5" stroke="#00d8e4" stroke-width="1" fill="none"/><text x="452" y="268.2" font-size="6.5" fill="#ffffff" stroke="#ffffff" stroke-width="0.3" text-anchor="end" font-weight="bold" font-family="Liberation Sans" textLength="23" lengthAdjust="spacingAndGlyphs" >原土夯实</text><path d="M383.5 282.5 L453.0 282.5" stroke="#00d8e4" stroke-width="1" fill="none"/><text x="452" y="280.7" font-size="6.5" fill="#ffffff" stroke="#ffffff" stroke-width="0.3" text-anchor="end" font-weight="bold" font-family="Liberation Sans" textLength="39" lengthAdjust="spacingAndGlyphs" >1:2.5砂浆抹面</text><path d="M383.5 297.5 L453.0 297.5" stroke="#00d8e4" stroke-width="1" fill="none"/><text x="452" y="295.2" font-size="6.5" fill="#ffffff" stroke="#ffffff" stroke-width="0.3" text-anchor="end" font-weight="bold" font-family="Liberation Sans" textLength="55" lengthAdjust="spacingAndGlyphs" >M7.5砂浆砌多孔砖墙</text><path d="M383.5 309.5 L453.0 309.5" stroke="#00d8e4" stroke-width="1" fill="none"/><text x="452" y="307.2" font-size="6.5" fill="#ffffff" stroke="#ffffff" stroke-width="0.3" text-anchor="end" font-weight="bold" font-family="Liberation Sans" textLength="33" lengthAdjust="spacingAndGlyphs" >100厚C15垫层</text><path d="M383.5 321.5 L453.0 321.5" stroke="#00d8e4" stroke-width="1" fill="none"/><text x="452" y="319.5" font-size="6.5" fill="#ffffff" stroke="#ffffff" stroke-width="0.3" text-anchor="end" font-weight="bold" font-family="Liberation Sans" textLength="23" lengthAdjust="spacingAndGlyphs" >原土夯实</text><text x="344" y="348.5" font-size="6.5" fill="#ffffff" stroke="#ffffff" stroke-width="0.3" text-anchor="end" font-weight="bold" font-family="Liberation Sans" textLength="29" lengthAdjust="spacingAndGlyphs" >原有土地面</text><path d="M315.0 351.5 L365.5 351.5" stroke="#ffffff" stroke-width="1" fill="none"/><path d="M354.0 395.5 L503.0 395.5" stroke="#b8b8b8" stroke-width="1" fill="none"/><rect x="354.5" y="395.5" width="58" height="11" fill="none" stroke="#c0c0c0" stroke-width="1"/><path d="M354.0 415.5 L470.5 415.5" stroke="#00d8e4" stroke-width="1" fill="none"/><path d="M354.5 408.0 L354.5 417.0" stroke="#00d8e4" stroke-width="1" fill="none"/><path d="M365.5 408.0 L365.5 417.0" stroke="#00d8e4" stroke-width="1" fill="none"/><path d="M400.5 408.0 L400.5 417.0" stroke="#00d8e4" stroke-width="1" fill="none"/><path d="M435.5 408.0 L435.5 417.0" stroke="#00d8e4" stroke-width="1" fill="none"/><path d="M470.5 408.0 L470.5 417.0" stroke="#00d8e4" stroke-width="1" fill="none"/><rect x="357" y="411" width="6" height="3" fill="#e0e0e0"/><rect x="380" y="411" width="6" height="3" fill="#e0e0e0"/><rect x="415" y="411" width="6" height="3" fill="#e0e0e0"/><rect x="450" y="411" width="6" height="3" fill="#e0e0e0"/><text x="420.0" y="433" font-size="10" fill="#ffffff" stroke="#fff" stroke-width="0.45" text-anchor="middle" font-weight="bold" font-family="Liberation Sans" textLength="70.0" lengthAdjust="spacingAndGlyphs">混凝土地面做法</text><path d="M385.0 435.5 L455.0 435.5" stroke="#ffffff" stroke-width="1" fill="none"/><path d="M528.0 309.5 L528.0 371.5" stroke="#e01ee0" stroke-width="2" fill="none"/><path d="M767.0 309.5 L767.0 371.5" stroke="#e01ee0" stroke-width="2" fill="none"/><path d="M527.6 334.0 L767.0 334.0" stroke="#b4b4b4" stroke-width="2" fill="none"/><rect x="528" y="343.7" width="239" height="17.6" fill="url(#dots)"/><path d="M528.0 343.5 L767.0 343.5" stroke="#d8d8d8" stroke-width="1" fill="none"/><path d="M528.0 361.5 L767.0 361.5" stroke="#e0e0e0" stroke-width="1" fill="none"/><path d="M640.5 279.0 L640.5 361.0" stroke="#00d8e4" stroke-width="1" fill="none"/><path d="M640.0 279.5 L736.6 279.5" stroke="#00d8e4" stroke-width="1" fill="none"/><text x="735.6" y="277.2" font-size="6.5" fill="#ffffff" stroke="#ffffff" stroke-width="0.3" text-anchor="end" font-weight="bold" font-family="Liberation Sans" textLength="46" lengthAdjust="spacingAndGlyphs" >60厚C20细石混凝土结合层</text><path d="M640.0 288.5 L736.6 288.5" stroke="#00d8e4" stroke-width="1" fill="none"/><text x="735.6" y="286.5" font-size="6.5" fill="#ffffff" stroke="#ffffff" stroke-width="0.3" text-anchor="end" font-weight="bold" font-family="Liberation Sans" textLength="57" lengthAdjust="spacingAndGlyphs" >150厚C20混凝土一层碎石</text><path d="M640.0 298.5 L736.6 298.5" stroke="#00d8e4" stroke-width="1" fill="none"/><text x="735.6" y="296.2" font-size="6.5" fill="#ffffff" stroke="#ffffff" stroke-width="0.3" text-anchor="end" font-weight="bold" font-family="Liberation Sans" textLength="41" lengthAdjust="spacingAndGlyphs" >300厚天然土夯实垫层</text><path d="M640.0 307.5 L736.6 307.5" stroke="#00d8e4" stroke-width="1" fill="none"/><text x="735.6" y="305.7" font-size="6.5" fill="#ffffff" stroke="#ffffff" stroke-width="0.3" text-anchor="end" font-weight="bold" font-family="Liberation Sans" textLength="21" lengthAdjust="spacingAndGlyphs" >原土夯实</text><text x="614.0" y="375" font-size="10" fill="#ffffff" stroke="#fff" stroke-width="0.45" text-anchor="middle" font-weight="bold" font-family="Liberation Sans" textLength="68.0" lengthAdjust="spacingAndGlyphs">混凝土地面做法</text><path d="M580.0 377.5 L648.0 377.5" stroke="#ffffff" stroke-width="1" fill="none"/><path d="M893.5 281.0 L893.5 344.7" stroke="#00d8e4" stroke-width="1" fill="none"/><path d="M893.5 344.7 L893.5 376.0" stroke="#d0d0d0" stroke-width="1" fill="none"/><path d="M893.7 281.5 L935.6 281.5" stroke="#00d8e4" stroke-width="1" fill="none"/><text x="934.6" y="279.5" font-size="5.5" fill="#ffffff" stroke="#ffffff" stroke-width="0.3" text-anchor="end" font-weight="bold" font-family="Liberation Sans" textLength="41" lengthAdjust="spacingAndGlyphs" >200*200*600花岗岩条石</text><path d="M893.7 288.5 L935.6 288.5" stroke="#00d8e4" stroke-width="1" fill="none"/><text x="934.6" y="286.5" font-size="5.5" fill="#ffffff" stroke="#ffffff" stroke-width="0.3" text-anchor="end" font-weight="bold" font-family="Liberation Sans" textLength="35" lengthAdjust="spacingAndGlyphs" >30厚1:3砂浆结合层</text><path d="M893.7 295.5 L935.6 295.5" stroke="#00d8e4" stroke-width="1" fill="none"/><text x="934.6" y="293.8" font-size="5.5" fill="#ffffff" stroke="#ffffff" stroke-width="0.3" text-anchor="end" font-weight="bold" font-family="Liberation Sans" textLength="24" lengthAdjust="spacingAndGlyphs" >C25砼垫层</text><path d="M893.7 302.5 L935.6 302.5" stroke="#a8a8a8" stroke-width="1" fill="none"/><text x="934.6" y="301.0" font-size="5.5" fill="#ffffff" stroke="#ffffff" stroke-width="0.3" text-anchor="end" font-weight="bold" font-family="Liberation Sans" textLength="25" lengthAdjust="spacingAndGlyphs" >100厚C15垫层</text><path d="M893.7 309.5 L935.6 309.5" stroke="#a8a8a8" stroke-width="1" fill="none"/><text x="934.6" y="307.8" font-size="5.5" fill="#ffffff" stroke="#ffffff" stroke-width="0.3" text-anchor="end" font-weight="bold" font-family="Liberation Sans" textLength="17" lengthAdjust="spacingAndGlyphs" >原土夯实</text><rect x="823.3" y="321.8" width="11.5" height="35" fill="none" stroke="#e8e8e8" stroke-width="1.3"/><path d="M825.5 323.0 L825.5 356.0" stroke="#d0d0d0" stroke-width="1" fill="none"/><path d="M832.5 323.0 L832.5 356.0" stroke="#d0d0d0" stroke-width="1" fill="none"/><rect x="821.2" y="320.3" width="15.8" height="2.6" fill="#c06a2a"/><rect x="821.2" y="321" width="3" height="19" fill="#b05a20"/><rect x="834.4" y="321" width="2.6" height="10" fill="#b05a20"/><rect x="819.9" y="356.1" width="18.1" height="4" fill="none" stroke="#d8d8d8" stroke-width="1"/><rect x="886.7" y="321.8" width="12.0" height="35" fill="none" stroke="#e8e8e8" stroke-width="1.3"/><path d="M888.5 323.0 L888.5 356.0" stroke="#d0d0d0" stroke-width="1" fill="none"/><path d="M896.5 323.0 L896.5 356.0" stroke="#d0d0d0" stroke-width="1" fill="none"/><rect x="885" y="320.3" width="15.6" height="2.6" fill="#c06a2a"/><rect x="885" y="321" width="3" height="19" fill="#b05a20"/><rect x="898.0" y="321" width="2.6" height="10" fill="#b05a20"/><rect x="883.5" y="356.1" width="18.5" height="4" fill="none" stroke="#d8d8d8" stroke-width="1"/><path d="M809.0 360.0 L902.0 360.0" stroke="#a0a0a0" stroke-width="2" fill="none"/><rect x="820" y="360" width="82" height="3.6" fill="none" stroke="#e0e0e0" stroke-width="1"/><path d="M837.0 326.5 L885.0 326.5" stroke="#22cc22" stroke-width="1" fill="none"/><path d="M799.0 338.5 L822.0 338.5" stroke="#22cc22" stroke-width="1" fill="none"/><path d="M900.0 338.5 L923.0 338.5" stroke="#22cc22" stroke-width="1" fill="none"/><path d="M835.0 338.5 L886.0 338.5" stroke="#00d8e4" stroke-width="1" fill="none"/><text x="860.5" y="336" font-size="5" fill="#ffffff" stroke="#ffffff" stroke-width="0.3" text-anchor="middle" font-weight="bold" font-family="Liberation Sans" textLength="11" lengthAdjust="spacingAndGlyphs" >1500</text><text x="842" y="331" font-size="5" fill="#ffffff" stroke="#ffffff" stroke-width="0.3" text-anchor="start" font-weight="bold" font-family="Liberation Sans" textLength="20" lengthAdjust="spacingAndGlyphs" >石材压顶边</text><polyline points="834.3,322.0 834.3,309.7 883.9,309.7" stroke="#00d8e4" stroke-width="1.4" fill="none"/><text x="883" y="307" font-size="5.2" fill="#ffffff" stroke="#ffffff" stroke-width="0.3" text-anchor="end" font-weight="bold" font-family="Liberation Sans" textLength="25" lengthAdjust="spacingAndGlyphs" >砂浆砌树池侧石，</text><text x="883" y="315.5" font-size="5.2" fill="#ffffff" stroke="#ffffff" stroke-width="0.3" text-anchor="end" font-weight="bold" font-family="Liberation Sans" textLength="45" lengthAdjust="spacingAndGlyphs" >树池外面用中砂抹平处理</text><path d="M900.6 324.5 L938.0 324.5" stroke="#00d8e4" stroke-width="1" fill="none"/><path d="M900.6 335.5 L938.0 335.5" stroke="#00d8e4" stroke-width="1" fill="none"/><text x="939" y="322.5" font-size="5.2" fill="#ffffff" stroke="#ffffff" stroke-width="0.3" text-anchor="end" font-weight="bold" font-family="Liberation Sans" textLength="32" lengthAdjust="spacingAndGlyphs" >300*300*600花岗岩</text><text x="939" y="333" font-size="5.2" fill="#ffffff" stroke="#ffffff" stroke-width="0.3" text-anchor="end" font-weight="bold" font-family="Liberation Sans" textLength="32" lengthAdjust="spacingAndGlyphs" >700*700*600花岗岩</text><path d="M814.0 319.5 L832.0 319.5" stroke="#00d8e4" stroke-width="1" fill="none"/><text x="815" y="317" font-size="5.2" fill="#ffffff" stroke="#ffffff" stroke-width="0.3" text-anchor="start" font-weight="bold" font-family="Liberation Sans" textLength="11" lengthAdjust="spacingAndGlyphs" >1.500</text><path d="M828 319 L832 319 L830 322Z" fill="none" stroke="#00d4de" stroke-width="0.8"/><path d="M798.0 357.5 L815.4 357.5" stroke="#00d8e4" stroke-width="1" fill="none"/><text x="798.5" y="355" font-size="5.2" fill="#ffffff" stroke="#ffffff" stroke-width="0.3" text-anchor="start" font-weight="bold" font-family="Liberation Sans" textLength="13" lengthAdjust="spacingAndGlyphs" >-0.150</text><path d="M810 357.4 L814 357.4 L812 360Z" fill="none" stroke="#00d4de" stroke-width="0.8"/><text x="799" y="344" font-size="5" fill="#ffffff" stroke="#ffffff" stroke-width="0.3" text-anchor="start" font-weight="bold" font-family="Liberation Sans" textLength="21" lengthAdjust="spacingAndGlyphs" >种植土回填</text><text x="901.5" y="344" font-size="5" fill="#ffffff" stroke="#ffffff" stroke-width="0.3" text-anchor="start" font-weight="bold" font-family="Liberation Sans" textLength="20" lengthAdjust="spacingAndGlyphs" >原土夯实</text><path d="M820.0 372.5 L902.0 372.5" stroke="#00d8e4" stroke-width="1" fill="none"/><path d="M820.0 379.5 L902.0 379.5" stroke="#00d8e4" stroke-width="1" fill="none"/><path d="M820.5 367.0 L820.5 374.0" stroke="#00d8e4" stroke-width="1" fill="none"/><path d="M826.5 367.0 L826.5 374.0" stroke="#00d8e4" stroke-width="1" fill="none"/><path d="M835.5 367.0 L835.5 374.0" stroke="#00d8e4" stroke-width="1" fill="none"/><path d="M838.5 367.0 L838.5 374.0" stroke="#00d8e4" stroke-width="1" fill="none"/><path d="M886.5 367.0 L886.5 374.0" stroke="#00d8e4" stroke-width="1" fill="none"/><path d="M889.5 367.0 L889.5 374.0" stroke="#00d8e4" stroke-width="1" fill="none"/><path d="M896.5 367.0 L896.5 374.0" stroke="#00d8e4" stroke-width="1" fill="none"/><path d="M902.5 367.0 L902.5 374.0" stroke="#00d8e4" stroke-width="1" fill="none"/><path d="M820.5 374.0 L820.5 381.0" stroke="#00d8e4" stroke-width="1" fill="none"/><path d="M902.5 374.0 L902.5 381.0" stroke="#00d8e4" stroke-width="1" fill="none"/><text x="838" y="370.5" font-size="5" fill="#ffffff" stroke="#ffffff" stroke-width="0.3" text-anchor="middle" font-weight="bold" font-family="Liberation Sans" textLength="18" lengthAdjust="spacingAndGlyphs" >200 400 20</text><text x="894" y="370.5" font-size="5" fill="#ffffff" stroke="#ffffff" stroke-width="0.3" text-anchor="middle" font-weight="bold" font-family="Liberation Sans" textLength="15" lengthAdjust="spacingAndGlyphs" >20 400 20</text><text x="861" y="369.5" font-size="5" fill="#ffffff" stroke="#ffffff" stroke-width="0.3" text-anchor="middle" font-weight="bold" font-family="Liberation Sans" textLength="10" lengthAdjust="spacingAndGlyphs" >1500</text><text x="861" y="377" font-size="5" fill="#ffffff" stroke="#ffffff" stroke-width="0.3" text-anchor="middle" font-weight="bold" font-family="Liberation Sans" textLength="10" lengthAdjust="spacingAndGlyphs" >2000</text><text x="855.1" y="402" font-size="12.5" fill="#ffffff" stroke="#fff" stroke-width="0.45" text-anchor="middle" font-weight="bold" font-family="Liberation Sans" textLength="59.0" lengthAdjust="spacingAndGlyphs">树池剖面图</text><path d="M825.6 404.5 L884.6 404.5" stroke="#ffffff" stroke-width="1" fill="none"/><circle cx="989.2" cy="329" r="35.8" fill="none" stroke="#e8761e" stroke-width="1.8"/><circle cx="989.2" cy="329" r="22.6" fill="none" stroke="#e8761e" stroke-width="1.8"/><path d="M1012.2 329.0 L1024.2 329.0" stroke="#e8761e" stroke-width="2.1"/><path d="M1012.0 331.7 L1024.0 333.1" stroke="#e8761e" stroke-width="2.1"/><path d="M1011.6 334.3 L1023.3 337.1" stroke="#e8761e" stroke-width="2.1"/><path d="M1010.8 336.9 L1022.1 341.0" stroke="#e8761e" stroke-width="2.1"/><path d="M1009.8 339.3 L1020.5 344.7" stroke="#e8761e" stroke-width="2.1"/><path d="M1008.4 341.6 L1018.4 348.2" stroke="#e8761e" stroke-width="2.1"/><path d="M1006.8 343.8 L1016.0 351.5" stroke="#e8761e" stroke-width="2.1"/><path d="M1005.0 345.7 L1013.2 354.5" stroke="#e8761e" stroke-width="2.1"/><path d="M1002.9 347.4 L1010.1 357.1" stroke="#e8761e" stroke-width="2.1"/><path d="M1000.7 348.9 L1006.7 359.3" stroke="#e8761e" stroke-width="2.1"/><path d="M998.3 350.1 L1003.1 361.1" stroke="#e8761e" stroke-width="2.1"/><path d="M995.8 351.0 L999.2 362.5" stroke="#e8761e" stroke-width="2.1"/><path d="M993.2 351.7 L995.3 363.5" stroke="#e8761e" stroke-width="2.1"/><path d="M990.5 352.0 L991.2 363.9" stroke="#e8761e" stroke-width="2.1"/><path d="M987.9 352.0 L987.2 363.9" stroke="#e8761e" stroke-width="2.1"/><path d="M985.2 351.7 L983.1 363.5" stroke="#e8761e" stroke-width="2.1"/><path d="M982.6 351.0 L979.2 362.5" stroke="#e8761e" stroke-width="2.1"/><path d="M980.1 350.1 L975.3 361.1" stroke="#e8761e" stroke-width="2.1"/><path d="M977.7 348.9 L971.7 359.3" stroke="#e8761e" stroke-width="2.1"/><path d="M975.5 347.4 L968.3 357.1" stroke="#e8761e" stroke-width="2.1"/><path d="M973.4 345.7 L965.2 354.5" stroke="#e8761e" stroke-width="2.1"/><path d="M971.6 343.8 L962.4 351.5" stroke="#e8761e" stroke-width="2.1"/><path d="M970.0 341.6 L960.0 348.2" stroke="#e8761e" stroke-width="2.1"/><path d="M968.6 339.3 L957.9 344.7" stroke="#e8761e" stroke-width="2.1"/><path d="M967.6 336.9 L956.3 341.0" stroke="#e8761e" stroke-width="2.1"/><path d="M966.8 334.3 L955.1 337.1" stroke="#e8761e" stroke-width="2.1"/><path d="M966.4 331.7 L954.4 333.1" stroke="#e8761e" stroke-width="2.1"/><path d="M966.2 329.0 L954.2 329.0" stroke="#e8761e" stroke-width="2.1"/><path d="M966.4 326.3 L954.4 324.9" stroke="#e8761e" stroke-width="2.1"/><path d="M966.8 323.7 L955.1 320.9" stroke="#e8761e" stroke-width="2.1"/><path d="M967.6 321.1 L956.3 317.0" stroke="#e8761e" stroke-width="2.1"/><path d="M968.6 318.7 L957.9 313.3" stroke="#e8761e" stroke-width="2.1"/><path d="M970.0 316.4 L960.0 309.8" stroke="#e8761e" stroke-width="2.1"/><path d="M971.6 314.2 L962.4 306.5" stroke="#e8761e" stroke-width="2.1"/><path d="M973.4 312.3 L965.2 303.5" stroke="#e8761e" stroke-width="2.1"/><path d="M975.5 310.6 L968.3 300.9" stroke="#e8761e" stroke-width="2.1"/><path d="M977.7 309.1 L971.7 298.7" stroke="#e8761e" stroke-width="2.1"/><path d="M980.1 307.9 L975.3 296.9" stroke="#e8761e" stroke-width="2.1"/><path d="M982.6 307.0 L979.2 295.5" stroke="#e8761e" stroke-width="2.1"/><path d="M985.2 306.3 L983.1 294.5" stroke="#e8761e" stroke-width="2.1"/><path d="M987.9 306.0 L987.2 294.1" stroke="#e8761e" stroke-width="2.1"/><path d="M990.5 306.0 L991.2 294.1" stroke="#e8761e" stroke-width="2.1"/><path d="M993.2 306.3 L995.3 294.5" stroke="#e8761e" stroke-width="2.1"/><path d="M995.8 307.0 L999.2 295.5" stroke="#e8761e" stroke-width="2.1"/><path d="M998.3 307.9 L1003.1 296.9" stroke="#e8761e" stroke-width="2.1"/><path d="M1000.7 309.1 L1006.7 298.7" stroke="#e8761e" stroke-width="2.1"/><path d="M1002.9 310.6 L1010.1 300.9" stroke="#e8761e" stroke-width="2.1"/><path d="M1005.0 312.3 L1013.2 303.5" stroke="#e8761e" stroke-width="2.1"/><path d="M1006.8 314.2 L1016.0 306.5" stroke="#e8761e" stroke-width="2.1"/><path d="M1008.4 316.4 L1018.4 309.8" stroke="#e8761e" stroke-width="2.1"/><path d="M1009.8 318.7 L1020.5 313.3" stroke="#e8761e" stroke-width="2.1"/><path d="M1010.8 321.1 L1022.1 317.0" stroke="#e8761e" stroke-width="2.1"/><path d="M1011.6 323.7 L1023.3 320.9" stroke="#e8761e" stroke-width="2.1"/><path d="M1012.0 326.3 L1024.0 324.9" stroke="#e8761e" stroke-width="2.1"/><path d="M989.2 329.0 L1031.5 301.0" stroke="#00d8e4" stroke-width="1.2" fill="none"/><path d="M989.2 329.0 L1027.0 322.3" stroke="#00d8e4" stroke-width="1.2" fill="none"/><text x="1014" y="308" font-size="6" fill="#ffffff" stroke="#ffffff" stroke-width="0.3" text-anchor="start" font-weight="bold" font-family="Liberation Sans" textLength="14" lengthAdjust="spacingAndGlyphs" transform="rotate(-36 1014 308)">R300</text><text x="1018" y="321" font-size="6" fill="#ffffff" stroke="#ffffff" stroke-width="0.3" text-anchor="start" font-weight="bold" font-family="Liberation Sans" textLength="12" lengthAdjust="spacingAndGlyphs" transform="rotate(-12 1018 321)">R100</text><text x="985.9" y="391" font-size="12.5" fill="#ffffff" stroke="#fff" stroke-width="0.45" text-anchor="middle" font-weight="bold" font-family="Liberation Sans" textLength="60.2" lengthAdjust="spacingAndGlyphs">树池平面图</text><path d="M955.8 393.5 L1016.0 393.5" stroke="#ffffff" stroke-width="1" fill="none"/><path d="M315.0 497.0 L315.0 559.0" stroke="#e01ee0" stroke-width="2" fill="none"/><path d="M554.0 497.0 L554.0 559.0" stroke="#e01ee0" stroke-width="2" fill="none"/><rect x="315.5" y="501" width="238.5" height="18" fill="url(#cross)"/><rect x="315.5" y="519" width="238.5" height="18.3" fill="url(#circ)"/><rect x="315.5" y="537.3" width="238.5" height="17.2" fill="url(#dots)"/><path d="M315.5 501.5 L554.0 501.5" stroke="#e8e8e8" stroke-width="1" fill="none"/><path d="M315.5 519.5 L554.0 519.5" stroke="#e8e8e8" stroke-width="1" fill="none"/><path d="M315.5 537.5 L554.0 537.5" stroke="#e8e8e8" stroke-width="1" fill="none"/><path d="M315.5 554.5 L554.0 554.5" stroke="#e8e8e8" stroke-width="1" fill="none"/><path d="M463.5 446.0 L463.5 555.0" stroke="#00d8e4" stroke-width="1" fill="none"/><path d="M463.0 446.5 L525.0 446.5" stroke="#00d8e4" stroke-width="1" fill="none"/><text x="524" y="444.2" font-size="6.5" fill="#ffffff" stroke="#ffffff" stroke-width="0.3" text-anchor="end" font-weight="bold" font-family="Liberation Sans" textLength="27" lengthAdjust="spacingAndGlyphs" >压痕面层</text><path d="M463.0 456.5 L525.0 456.5" stroke="#00d8e4" stroke-width="1" fill="none"/><text x="524" y="454.4" font-size="6.5" fill="#ffffff" stroke="#ffffff" stroke-width="0.3" text-anchor="end" font-weight="bold" font-family="Liberation Sans" textLength="54" lengthAdjust="spacingAndGlyphs" >150厚C25砼混凝土</text><path d="M463.0 466.5 L525.0 466.5" stroke="#00d8e4" stroke-width="1" fill="none"/><text x="524" y="464.2" font-size="6.5" fill="#ffffff" stroke="#ffffff" stroke-width="0.3" text-anchor="end" font-weight="bold" font-family="Liberation Sans" textLength="43" lengthAdjust="spacingAndGlyphs" >20厚+%水泥层</text><path d="M463.0 475.5 L525.0 475.5" stroke="#00d8e4" stroke-width="1" fill="none"/><text x="524" y="473.7" font-size="6.5" fill="#ffffff" stroke="#ffffff" stroke-width="0.3" text-anchor="end" font-weight="bold" font-family="Liberation Sans" textLength="44" lengthAdjust="spacingAndGlyphs" >300厚夯碎土垫</text><path d="M463.0 485.5 L525.0 485.5" stroke="#00d8e4" stroke-width="1" fill="none"/><text x="524" y="483.4" font-size="6.5" fill="#ffffff" stroke="#ffffff" stroke-width="0.3" text-anchor="end" font-weight="bold" font-family="Liberation Sans" textLength="35" lengthAdjust="spacingAndGlyphs" >原土打夯层</text><text x="419" y="489" font-size="6.5" fill="#ffffff" stroke="#ffffff" stroke-width="0.3" text-anchor="end" font-weight="bold" font-family="Liberation Sans" textLength="20" lengthAdjust="spacingAndGlyphs" >伸缩缝</text><polyline points="399.0,491.5 418.0,491.5 428.0,501.5" stroke="#00d8e4" stroke-width="1.4" fill="none"/><path d="M421.0 511.5 L437.0 511.5" stroke="#ffffff" stroke-width="1" fill="none"/><path d="M428.5 503.0 L428.5 520.0" stroke="#ffffff" stroke-width="1" fill="none"/><text x="441.7" y="569" font-size="10.5" fill="#ffffff" stroke="#fff" stroke-width="0.45" text-anchor="middle" font-weight="bold" font-family="Liberation Sans" textLength="69.4" lengthAdjust="spacingAndGlyphs">停车车场压花路</text><path d="M407.0 571.5 L476.4 571.5" stroke="#ffffff" stroke-width="1" fill="none"/><path d="M593.0 484.0 L593.0 545.0" stroke="#e01ee0" stroke-width="2" fill="none"/><path d="M833.0 484.0 L833.0 545.0" stroke="#e01ee0" stroke-width="2" fill="none"/><path d="M593.0 499.5 L832.6 499.5" stroke="#e0e0e0" stroke-width="1" fill="none"/><path d="M593.0 505.5 L832.6 505.5" stroke="#d8d8d8" stroke-width="1" fill="none"/><path d="M593.0 508.5 L832.6 508.5" stroke="#a0a0a0" stroke-width="1" fill="none"/><rect x="593.5" y="517" width="239" height="18" fill="url(#dots)"/><path d="M593.0 517.5 L832.6 517.5" stroke="#e0e0e0" stroke-width="1" fill="none"/><path d="M593.0 535.5 L832.6 535.5" stroke="#e0e0e0" stroke-width="1" fill="none"/><path d="M705.5 427.0 L705.5 535.5" stroke="#00d8e4" stroke-width="1" fill="none"/><path d="M705.6 427.5 L801.7 427.5" stroke="#00d8e4" stroke-width="1" fill="none"/><text x="800.7" y="425.2" font-size="6.5" fill="#ffffff" stroke="#ffffff" stroke-width="0.3" text-anchor="end" font-weight="bold" font-family="Liberation Sans" textLength="93" lengthAdjust="spacingAndGlyphs" >200*100*60透水砖（干铺1:3砂浆结合）</text><path d="M705.6 437.5 L801.7 437.5" stroke="#00d8e4" stroke-width="1" fill="none"/><text x="800.7" y="435.4" font-size="6.5" fill="#ffffff" stroke="#ffffff" stroke-width="0.3" text-anchor="end" font-weight="bold" font-family="Liberation Sans" textLength="46" lengthAdjust="spacingAndGlyphs" >30厚1:3砂浆结合层</text><path d="M705.6 446.5 L801.7 446.5" stroke="#00d8e4" stroke-width="1" fill="none"/><text x="800.7" y="444.7" font-size="6.5" fill="#ffffff" stroke="#ffffff" stroke-width="0.3" text-anchor="end" font-weight="bold" font-family="Liberation Sans" textLength="33" lengthAdjust="spacingAndGlyphs" >150厚C15垫层</text><path d="M705.6 456.5 L801.7 456.5" stroke="#00d8e4" stroke-width="1" fill="none"/><text x="800.7" y="454.4" font-size="6.5" fill="#ffffff" stroke="#ffffff" stroke-width="0.3" text-anchor="end" font-weight="bold" font-family="Liberation Sans" textLength="42" lengthAdjust="spacingAndGlyphs" >300厚夯碎土垫层</text><path d="M705.6 465.5 L801.7 465.5" stroke="#00d8e4" stroke-width="1" fill="none"/><text x="800.7" y="463.8" font-size="6.5" fill="#ffffff" stroke="#ffffff" stroke-width="0.3" text-anchor="end" font-weight="bold" font-family="Liberation Sans" textLength="23" lengthAdjust="spacingAndGlyphs" >原土夯实</text><text x="679.2" y="552" font-size="10.5" fill="#ffffff" stroke="#fff" stroke-width="0.45" text-anchor="middle" font-weight="bold" font-family="Liberation Sans" textLength="69.6" lengthAdjust="spacingAndGlyphs">透水砖路面大样</text><path d="M644.4 554.5 L714.0 554.5" stroke="#ffffff" stroke-width="1" fill="none"/><text x="715" y="551.5" font-size="8" fill="#ffffff" stroke="#ffffff" stroke-width="0.3" text-anchor="start" font-weight="normal" font-family="Liberation Sans" textLength="102" lengthAdjust="spacingAndGlyphs" >(间隔6米切缝深度为板厚3.6)</text><path d="M961.4 430.0 L972.5 457.7" stroke="#a8a8a8" stroke-width="1.2" fill="none"/><path d="M988 500.5 Q1000 514 1036.5 506" fill="none" stroke="#a8a8a8" stroke-width="1.2"/><path d="M1036.5 506.0 L897.0 599.0" stroke="#a8a8a8" stroke-width="1.2" fill="none"/><path d="M880.6 479.0 L893.3 512.4" stroke="#a8a8a8" stroke-width="1.2" fill="none"/><path d="M906 553.6 Q914 580 897 599" fill="none" stroke="#a8a8a8" stroke-width="1.2"/><path d="M867.1 534.9 L999.4 445.0" stroke="#a8a8a8" stroke-width="1.2" fill="none"/><path d="M879.8 569.0 L1010.0 481.5" stroke="#a8a8a8" stroke-width="1.2" fill="none"/><path d="M892.5 521.9 L973.3 463.3" stroke="#a8a8a8" stroke-width="1.1" fill="none"/><path d="M902.0 547.2 L985.0 492.6" stroke="#a8a8a8" stroke-width="1.1" fill="none"/><path d="M869.5 541.7 L890.0 527.4" stroke="#00d8e4" stroke-width="1.4" fill="none"/><path d="M983.6 464.0 L1002.6 452.2" stroke="#00d8e4" stroke-width="1.4" fill="none"/><path d="M877.1 561.5 L898.0 548.0" stroke="#00d8e4" stroke-width="1.4" fill="none"/><path d="M991.5 484.6 L1010.0 472.0" stroke="#00d8e4" stroke-width="1.4" fill="none"/><path d="M881.4 507.9 L973.0 446.2" stroke="#00d8e4" stroke-width="1.5" fill="none"/><path d="M881.4 507.9 L886.1 514.0" stroke="#00d8e4" stroke-width="1.3" fill="none"/><path d="M973.0 446.2 L976.4 449.8" stroke="#00d8e4" stroke-width="1.3" fill="none"/><path d="M876.6 519.5 L894.0 562.3" stroke="#00d8e4" stroke-width="1.3" fill="none"/><path d="M894.0 562.3 L902.0 559.0" stroke="#00d8e4" stroke-width="1.3" fill="none"/><circle cx="881.4" cy="507.9" r="1.5" fill="#00d4de"/><circle cx="973" cy="446.2" r="1.5" fill="#00d4de"/><polygon points="887.0,515.5 977.2,454.6 994.3,497.3 902.8,558.3" stroke="#e6e61e" stroke-width="1.5" fill="none"/><path d="M892.5 512.4 L972.5 457.7" stroke="#c8c090" stroke-width="1.1" fill="none"/><path d="M892.5 512.4 L908.3 555.1" stroke="#e6e61e" stroke-width="1.3" fill="none"/><path d="M972.5 457.7 L988.0 500.5" stroke="#e6e61e" stroke-width="1.3" fill="none"/><path d="M977.2 454.6 L994.3 497.3" stroke="#e8e8d8" stroke-width="1.2" fill="none"/><path d="M980.0 449.0 L987.0 460.0" stroke="#d0d0d0" stroke-width="1" fill="none"/><path d="M984.0 476.0 L990.0 486.0" stroke="#d0d0d0" stroke-width="1" fill="none"/><path d="M876.0 521.0 L882.0 528.0" stroke="#d0d0d0" stroke-width="1" fill="none"/><path d="M884.0 545.0 L890.0 552.0" stroke="#d0d0d0" stroke-width="1" fill="none"/><text x="926.5" y="477" font-size="6" fill="#ffffff" stroke="#ffffff" stroke-width="0.3" text-anchor="middle" font-weight="bold" font-family="Liberation Sans" transform="rotate(-34 926.5 477)">W</text><text x="979.6" y="456" font-size="7.5" fill="#ff1a1a" stroke="#ff1a1a" stroke-width="0.3" text-anchor="middle" font-weight="normal" font-family="Liberation Sans" transform="rotate(-20 979.6 456)">B</text><text x="986.7" y="481" font-size="7.5" fill="#ff1a1a" stroke="#ff1a1a" stroke-width="0.3" text-anchor="middle" font-weight="normal" font-family="Liberation Sans" transform="rotate(-20 986.7 481)">C</text><text x="883" y="521.5" font-size="7.5" fill="#ff1a1a" stroke="#ff1a1a" stroke-width="0.3" text-anchor="middle" font-weight="normal" font-family="Liberation Sans" transform="rotate(-20 883 521.5)">B</text><text x="891.7" y="544.5" font-size="7.5" fill="#ff1a1a" stroke="#ff1a1a" stroke-width="0.3" text-anchor="middle" font-weight="normal" font-family="Liberation Sans" transform="rotate(-20 891.7 544.5)">C</text><text x="999.4" y="468" font-size="6" fill="#ffffff" stroke="#ffffff" stroke-width="0.3" text-anchor="middle" font-weight="bold" font-family="Liberation Sans" textLength="20" lengthAdjust="spacingAndGlyphs" transform="rotate(-34 999.4 468)">收缩缝间距</text><text x="872.7" y="552" font-size="6" fill="#ffffff" stroke="#ffffff" stroke-width="0.3" text-anchor="middle" font-weight="bold" font-family="Liberation Sans" textLength="20" lengthAdjust="spacingAndGlyphs" transform="rotate(-34 872.7 552)">收缩缝间距</text><text x="955.0" y="583" font-size="10.5" fill="#ffffff" stroke="#fff" stroke-width="0.45" text-anchor="middle" font-weight="bold" font-family="Liberation Sans" textLength="98.0" lengthAdjust="spacingAndGlyphs">压花路面过渡沟盖平拼</text><path d="M906.0 585.5 L1004.0 585.5" stroke="#ffffff" stroke-width="1" fill="none"/><path d="M349.9 631.5 L417.1 631.5" stroke="#e8e8e8" stroke-width="1" fill="none"/><path d="M349.9 657.5 L417.1 657.5" stroke="#e8e8e8" stroke-width="1" fill="none"/><path d="M343.5 631.2 L343.5 657.5" stroke="#00d8e4" stroke-width="1" fill="none"/><path d="M341.5 631.5 L345.5 631.5" stroke="#00d8e4" stroke-width="1" fill="none"/><path d="M341.5 657.5 L345.5 657.5" stroke="#00d8e4" stroke-width="1" fill="none"/><path d="M343.5 631.2 L341.5 635.2 M343.5 631.2 L345.5 635.2 M343.5 657.5 L341.5 653.5 M343.5 657.5 L345.5 653.5" stroke="#00d8e4" stroke-width="1"/><text x="339.5" y="644.5" font-size="5" fill="#ffffff" stroke="#ffffff" stroke-width="0.3" text-anchor="middle" font-weight="bold" font-family="Liberation Sans" textLength="10" lengthAdjust="spacingAndGlyphs" transform="rotate(-90 339.5 644.5)">板厚</text><path d="M439.4 632.5 L505.7 632.5" stroke="#e8e8e8" stroke-width="1" fill="none"/><path d="M439.4 658.5 L505.7 658.5" stroke="#e8e8e8" stroke-width="1" fill="none"/><path d="M432.5 632.0 L432.5 658.3" stroke="#00d8e4" stroke-width="1" fill="none"/><path d="M430.5 632.5 L434.5 632.5" stroke="#00d8e4" stroke-width="1" fill="none"/><path d="M430.5 658.5 L434.5 658.5" stroke="#00d8e4" stroke-width="1" fill="none"/><path d="M432.5 632 L430.5 636 M432.5 632 L434.5 636 M432.5 658.3 L430.5 654.3 M432.5 658.3 L434.5 654.3" stroke="#00d8e4" stroke-width="1"/><text x="428.5" y="644.5" font-size="5" fill="#ffffff" stroke="#ffffff" stroke-width="0.3" text-anchor="middle" font-weight="bold" font-family="Liberation Sans" textLength="10" lengthAdjust="spacingAndGlyphs" transform="rotate(-90 428.5 644.5)">板厚</text><rect x="371.7" y="649.1" width="1.3" height="1.3" fill="#e0e0e0"/><rect x="381.3" y="649.1" width="1.3" height="1.3" fill="#e0e0e0"/><rect x="353.9" y="643.8" width="1.3" height="1.3" fill="#e0e0e0"/><path d="M372.5 652.1 l4.5 -1 l-2 4.5z" fill="none" stroke="#e8e8e8" stroke-width="1"/><rect x="367.1" y="639.7" width="1.3" height="1.3" fill="#e0e0e0"/><path d="M370.2 635.2 l4.5 -1 l-2 4.5z" fill="none" stroke="#e8e8e8" stroke-width="1"/><rect x="361.4" y="652.4" width="1.3" height="1.3" fill="#e0e0e0"/><path d="M357.8 650.1 l4.5 -1 l-2 4.5z" fill="none" stroke="#e8e8e8" stroke-width="1"/><path d="M371.5 637.4 l4.5 -1 l-2 4.5z" fill="none" stroke="#e8e8e8" stroke-width="1"/><path d="M379.1 639.0 l4.5 -1 l-2 4.5z" fill="none" stroke="#e8e8e8" stroke-width="1"/><path d="M382.5 651.6 l4.5 -1 l-2 4.5z" fill="none" stroke="#e8e8e8" stroke-width="1"/><rect x="381.8" y="645.2" width="1.3" height="1.3" fill="#e0e0e0"/><rect x="359.1" y="652.9" width="1.3" height="1.3" fill="#e0e0e0"/><path d="M382.0 652.0 l4.5 -1 l-2 4.5z" fill="none" stroke="#e8e8e8" stroke-width="1"/><path d="M363.8 638.2 l4.5 -1 l-2 4.5z" fill="none" stroke="#e8e8e8" stroke-width="1"/><rect x="355.0" y="640.7" width="1.3" height="1.3" fill="#e0e0e0"/><path d="M353.1 647.9 l4.5 -1 l-2 4.5z" fill="none" stroke="#e8e8e8" stroke-width="1"/><rect x="362.3" y="650.6" width="1.3" height="1.3" fill="#e0e0e0"/><rect x="397.9" y="644.1" width="1.3" height="1.3" fill="#e0e0e0"/><path d="M391.4 653.5 l4.5 -1 l-2 4.5z" fill="none" stroke="#e8e8e8" stroke-width="1"/><path d="M408.7 651.1 l4.5 -1 l-2 4.5z" fill="none" stroke="#e8e8e8" stroke-width="1"/><rect x="409.7" y="642.0" width="1.3" height="1.3" fill="#e0e0e0"/><path d="M390.2 635.9 l4.5 -1 l-2 4.5z" fill="none" stroke="#e8e8e8" stroke-width="1"/><rect x="413.9" y="638.7" width="1.3" height="1.3" fill="#e0e0e0"/><path d="M413.2 652.9 l4.5 -1 l-2 4.5z" fill="none" stroke="#e8e8e8" stroke-width="1"/><rect x="398.9" y="645.0" width="1.3" height="1.3" fill="#e0e0e0"/><rect x="392.7" y="649.2" width="1.3" height="1.3" fill="#e0e0e0"/><rect x="411.5" y="635.7" width="1.3" height="1.3" fill="#e0e0e0"/><rect x="392.3" y="641.5" width="1.3" height="1.3" fill="#e0e0e0"/><rect x="413.0" y="641.5" width="1.3" height="1.3" fill="#e0e0e0"/><path d="M403.6 640.9 l4.5 -1 l-2 4.5z" fill="none" stroke="#e8e8e8" stroke-width="1"/><path d="M394.4 636.5 l4.5 -1 l-2 4.5z" fill="none" stroke="#e8e8e8" stroke-width="1"/><path d="M407.2 653.9 l4.5 -1 l-2 4.5z" fill="none" stroke="#e8e8e8" stroke-width="1"/><rect x="391.2" y="653.7" width="1.3" height="1.3" fill="#e0e0e0"/><rect x="400.1" y="639.5" width="1.3" height="1.3" fill="#e0e0e0"/><rect x="410.7" y="643.7" width="1.3" height="1.3" fill="#e0e0e0"/><path d="M444.5 652.4 l4.5 -1 l-2 4.5z" fill="none" stroke="#e8e8e8" stroke-width="1"/><path d="M456.3 650.9 l4.5 -1 l-2 4.5z" fill="none" stroke="#e8e8e8" stroke-width="1"/><rect x="462.8" y="653.0" width="1.3" height="1.3" fill="#e0e0e0"/><rect x="464.3" y="637.0" width="1.3" height="1.3" fill="#e0e0e0"/><path d="M447.0 651.0 l4.5 -1 l-2 4.5z" fill="none" stroke="#e8e8e8" stroke-width="1"/><rect x="455.2" y="654.0" width="1.3" height="1.3" fill="#e0e0e0"/><rect x="469.4" y="643.6" width="1.3" height="1.3" fill="#e0e0e0"/><path d="M462.7 644.1 l4.5 -1 l-2 4.5z" fill="none" stroke="#e8e8e8" stroke-width="1"/><rect x="453.9" y="637.8" width="1.3" height="1.3" fill="#e0e0e0"/><rect x="469.7" y="653.2" width="1.3" height="1.3" fill="#e0e0e0"/><path d="M456.5 641.4 l4.5 -1 l-2 4.5z" fill="none" stroke="#e8e8e8" stroke-width="1"/><rect x="450.4" y="649.9" width="1.3" height="1.3" fill="#e0e0e0"/><rect x="452.8" y="649.9" width="1.3" height="1.3" fill="#e0e0e0"/><rect x="461.8" y="647.6" width="1.3" height="1.3" fill="#e0e0e0"/><path d="M452.8 648.4 l4.5 -1 l-2 4.5z" fill="none" stroke="#e8e8e8" stroke-width="1"/><rect x="456.1" y="649.6" width="1.3" height="1.3" fill="#e0e0e0"/><rect x="450.9" y="653.0" width="1.3" height="1.3" fill="#e0e0e0"/><rect x="458.7" y="635.2" width="1.3" height="1.3" fill="#e0e0e0"/><rect x="485.0" y="647.8" width="1.3" height="1.3" fill="#e0e0e0"/><rect x="498.6" y="647.3" width="1.3" height="1.3" fill="#e0e0e0"/><rect x="487.3" y="647.2" width="1.3" height="1.3" fill="#e0e0e0"/><rect x="498.9" y="641.7" width="1.3" height="1.3" fill="#e0e0e0"/><rect x="499.9" y="648.1" width="1.3" height="1.3" fill="#e0e0e0"/><rect x="502.0" y="644.8" width="1.3" height="1.3" fill="#e0e0e0"/><rect x="483.0" y="650.9" width="1.3" height="1.3" fill="#e0e0e0"/><rect x="490.5" y="648.1" width="1.3" height="1.3" fill="#e0e0e0"/><rect x="496.5" y="638.3" width="1.3" height="1.3" fill="#e0e0e0"/><rect x="492.9" y="647.6" width="1.3" height="1.3" fill="#e0e0e0"/><rect x="494.0" y="649.7" width="1.3" height="1.3" fill="#e0e0e0"/><path d="M496.3 635.5 l4.5 -1 l-2 4.5z" fill="none" stroke="#e8e8e8" stroke-width="1"/><path d="M489.6 647.4 l4.5 -1 l-2 4.5z" fill="none" stroke="#e8e8e8" stroke-width="1"/><path d="M495.5 647.0 l4.5 -1 l-2 4.5z" fill="none" stroke="#e8e8e8" stroke-width="1"/><path d="M490.3 639.3 l4.5 -1 l-2 4.5z" fill="none" stroke="#e8e8e8" stroke-width="1"/><path d="M482.2 641.0 l4.5 -1 l-2 4.5z" fill="none" stroke="#e8e8e8" stroke-width="1"/><rect x="483.6" y="635.7" width="1.3" height="1.3" fill="#e0e0e0"/><rect x="488.1" y="646.6" width="1.3" height="1.3" fill="#e0e0e0"/><path d="M386 632 L385 638 L387 644 L385 650 L386 657" fill="none" stroke="#d8d8d8" stroke-width="1"/><rect x="385" y="632" width="3.5" height="6" fill="#d0d0d0"/><rect x="472.3" y="632" width="4.7" height="26.3" fill="#8a8a8a" stroke="#d8d8d8" stroke-width="0.8"/><polyline points="385.6,631.7 396.8,617.4 434.1,617.4" stroke="#00d8e4" stroke-width="1.4" fill="none"/><text x="436.8" y="615.5" font-size="5" fill="#ffffff" stroke="#ffffff" stroke-width="0.3" text-anchor="end" font-weight="bold" font-family="Liberation Sans" textLength="32" lengthAdjust="spacingAndGlyphs" >预制三角嵌缝钢条</text><polyline points="477.0,635.0 486.6,622.5 523.2,622.5" stroke="#00d8e4" stroke-width="1.4" fill="none"/><text x="528" y="620.5" font-size="5" fill="#ffffff" stroke="#ffffff" stroke-width="0.3" text-anchor="end" font-weight="bold" font-family="Liberation Sans" textLength="32" lengthAdjust="spacingAndGlyphs" >预制三角嵌缝钢条</text><polyline points="474.7,643.0 474.7,667.8 502.5,667.8" stroke="#00d8e4" stroke-width="1.4" fill="none"/><text x="502.5" y="665.8" font-size="5" fill="#ffffff" stroke="#ffffff" stroke-width="0.3" text-anchor="end" font-weight="bold" font-family="Liberation Sans" textLength="20" lengthAdjust="spacingAndGlyphs" >沥青麻丝</text><path d="M381.0 626.5 L388.0 626.5" stroke="#00d8e4" stroke-width="1" fill="none"/><path d="M393.5 628.0 L393.5 640.0" stroke="#00d8e4" stroke-width="1" fill="none"/><path d="M469.0 625.5 L477.0 625.5" stroke="#00d8e4" stroke-width="1" fill="none"/><path d="M485.5 628.0 L485.5 640.0" stroke="#00d8e4" stroke-width="1" fill="none"/><text x="387.6" y="678.5" font-size="6.5" fill="#ffffff" stroke="#fff" stroke-width="0.1" text-anchor="middle" font-weight="bold" font-family="Liberation Sans" textLength="48.5" lengthAdjust="spacingAndGlyphs">假缝传力杆大样图</text><path d="M363.4 680.5 L411.9 680.5" stroke="#ffffff" stroke-width="1" fill="none"/><text x="470.8" y="678.5" font-size="6.5" fill="#ffffff" stroke="#fff" stroke-width="0.1" text-anchor="middle" font-weight="bold" font-family="Liberation Sans" textLength="71.5" lengthAdjust="spacingAndGlyphs">胀缝传力杆大样图</text><path d="M435.0 680.5 L506.5 680.5" stroke="#ffffff" stroke-width="1" fill="none"/><text x="329" y="727" font-size="7" fill="#ffffff" stroke="#ffffff" stroke-width="0.3" text-anchor="start" font-weight="bold" font-family="Liberation Sans" textLength="14" lengthAdjust="spacingAndGlyphs" >说明：</text><text x="329" y="739" font-size="7" fill="#ffffff" stroke="#ffffff" stroke-width="0.3" text-anchor="start" font-weight="bold" font-family="Liberation Sans" textLength="95" lengthAdjust="spacingAndGlyphs" >本图尺寸除说明外，均以毫米为单位。</text><text x="329" y="751" font-size="7" fill="#ffffff" stroke="#ffffff" stroke-width="0.3" text-anchor="start" font-weight="bold" font-family="Liberation Sans" textLength="199" lengthAdjust="spacingAndGlyphs" >所有路缆 路头按国标设计要求（GB5768-2009），采用做成路面被砌色标路料</text><rect x="564.3" y="684.6" width="15.5" height="32.9" fill="none" stroke="#e8e8e8" stroke-width="1.2"/><rect x="560" y="717.5" width="23.9" height="4.3" fill="none" stroke="#e8e8e8" stroke-width="1.2"/><rect x="555.2" y="721.8" width="33.4" height="5.2" fill="none" stroke="#e8e8e8" stroke-width="1.2"/><rect x="764.6" y="684.6" width="14.8" height="32.9" fill="none" stroke="#e8e8e8" stroke-width="1.2"/><rect x="760" y="717.5" width="24.0" height="4.3" fill="none" stroke="#e8e8e8" stroke-width="1.2"/><rect x="755" y="721.8" width="34.0" height="5.2" fill="none" stroke="#e8e8e8" stroke-width="1.2"/><path d="M579.8 693.5 L764.6 693.5" stroke="#e8e8e8" stroke-width="1" fill="none"/><path d="M566 702 L778 702" stroke="#e01c1c" stroke-width="1.6"/><path d="M566 702 L778 702" stroke="#ffffff" stroke-width="1.6" stroke-dasharray="1.2 3.8"/><path d="M579.8 704.5 L764.6 704.5" stroke="#d8d8d8" stroke-width="1" fill="none"/><path d="M579.8 710.5 L764.6 710.5" stroke="#e8e8e8" stroke-width="1" fill="none"/><path d="M583.9 721.5 L760.0 721.5" stroke="#e8e8e8" stroke-width="1" fill="none"/><path d="M672.5 627.0 L672.5 721.8" stroke="#00d8e4" stroke-width="1" fill="none"/><path d="M672.0 627.5 L733.6 627.5" stroke="#00d8e4" stroke-width="1" fill="none"/><text x="732.6" y="625.2" font-size="6.5" fill="#ffffff" stroke="#ffffff" stroke-width="0.3" text-anchor="end" font-weight="bold" font-family="Liberation Sans" textLength="21" lengthAdjust="spacingAndGlyphs" >压痕面层</text><path d="M672.0 636.5 L733.6 636.5" stroke="#00d8e4" stroke-width="1" fill="none"/><text x="732.6" y="635.1" font-size="6.5" fill="#ffffff" stroke="#ffffff" stroke-width="0.3" text-anchor="end" font-weight="bold" font-family="Liberation Sans" textLength="38" lengthAdjust="spacingAndGlyphs" >200厚C25砼面板</text><path d="M672.0 646.5 L733.6 646.5" stroke="#00d8e4" stroke-width="1" fill="none"/><text x="732.6" y="644.6" font-size="6.5" fill="#ffffff" stroke="#ffffff" stroke-width="0.3" text-anchor="end" font-weight="bold" font-family="Liberation Sans" textLength="31" lengthAdjust="spacingAndGlyphs" >Φ14@150双向</text><path d="M672.0 656.5 L733.6 656.5" stroke="#00d8e4" stroke-width="1" fill="none"/><text x="732.6" y="654.2" font-size="6.5" fill="#ffffff" stroke="#ffffff" stroke-width="0.3" text-anchor="end" font-weight="bold" font-family="Liberation Sans" textLength="35" lengthAdjust="spacingAndGlyphs" >100厚碎石垫层</text><path d="M672.0 665.5 L733.6 665.5" stroke="#00d8e4" stroke-width="1" fill="none"/><text x="732.6" y="663.7" font-size="6.5" fill="#ffffff" stroke="#ffffff" stroke-width="0.3" text-anchor="end" font-weight="bold" font-family="Liberation Sans" textLength="41" lengthAdjust="spacingAndGlyphs" >300厚夯碎土垫层</text><path d="M672.0 675.5 L733.6 675.5" stroke="#00d8e4" stroke-width="1" fill="none"/><text x="732.6" y="673.5" font-size="6.5" fill="#ffffff" stroke="#ffffff" stroke-width="0.3" text-anchor="end" font-weight="bold" font-family="Liberation Sans" textLength="21" lengthAdjust="spacingAndGlyphs" >原土打夯</text><path d="M774.5 646.0 L774.5 727.0" stroke="#00d8e4" stroke-width="1" fill="none"/><path d="M774.2 646.5 L837.9 646.5" stroke="#00d8e4" stroke-width="1" fill="none"/><text x="836.9" y="644.2" font-size="6.5" fill="#ffffff" stroke="#ffffff" stroke-width="0.3" text-anchor="end" font-weight="bold" font-family="Liberation Sans" textLength="28" lengthAdjust="spacingAndGlyphs" >C25砼面层</text><path d="M774.2 656.5 L837.9 656.5" stroke="#00d8e4" stroke-width="1" fill="none"/><text x="836.9" y="654.2" font-size="6.5" fill="#ffffff" stroke="#ffffff" stroke-width="0.3" text-anchor="end" font-weight="bold" font-family="Liberation Sans" textLength="34" lengthAdjust="spacingAndGlyphs" >170厚C25砼垫层</text><path d="M774.2 665.5 L837.9 665.5" stroke="#00d8e4" stroke-width="1" fill="none"/><text x="836.9" y="663.7" font-size="6.5" fill="#ffffff" stroke="#ffffff" stroke-width="0.3" text-anchor="end" font-weight="bold" font-family="Liberation Sans" textLength="21" lengthAdjust="spacingAndGlyphs" >原土打夯</text><text x="678.1" y="741" font-size="8.5" fill="#ffffff" stroke="#fff" stroke-width="0.45" text-anchor="middle" font-weight="bold" font-family="Liberation Sans" textLength="94.3" lengthAdjust="spacingAndGlyphs">压花路过渡平拆-桥缝部位</text><path d="M631.0 743.5 L725.3 743.5" stroke="#ffffff" stroke-width="1" fill="none"/><rect x="825.5" y="684.6" width="14.3" height="18.8" fill="none" stroke="#e8e8e8" stroke-width="1.2"/><rect x="1025.6" y="684.6" width="14.4" height="18.8" fill="none" stroke="#e8e8e8" stroke-width="1.2"/><path d="M839.8 694.5 L1025.6 694.5" stroke="#e8e8e8" stroke-width="1" fill="none"/><path d="M825.5 703.5 L1040.0 703.5" stroke="#e8e8e8" stroke-width="1" fill="none"/><path d="M828 701.6 L1038 701.6" stroke="#e01c1c" stroke-width="1.4"/><path d="M828 701.6 L1038 701.6" stroke="#ffffff" stroke-width="1.4" stroke-dasharray="1.2 3.8"/><polyline points="831.5,692.5 831.5,676.0 893.9,676.0" stroke="#00d8e4" stroke-width="1.4" fill="none"/><text x="890" y="673.5" font-size="5.5" fill="#ffffff" stroke="#ffffff" stroke-width="0.3" text-anchor="end" font-weight="bold" font-family="Liberation Sans" textLength="25" lengthAdjust="spacingAndGlyphs" >C25砼面层</text><path d="M932.5 627.3 L932.5 703.0" stroke="#00d8e4" stroke-width="1" fill="none"/><path d="M932.6 627.5 L994.8 627.5" stroke="#00d8e4" stroke-width="1" fill="none"/><text x="993.8" y="625.5" font-size="6.5" fill="#ffffff" stroke="#ffffff" stroke-width="0.3" text-anchor="end" font-weight="bold" font-family="Liberation Sans" textLength="22" lengthAdjust="spacingAndGlyphs" >压痕面层</text><path d="M932.6 637.5 L994.8 637.5" stroke="#00d8e4" stroke-width="1" fill="none"/><text x="993.8" y="635.2" font-size="6.5" fill="#ffffff" stroke="#ffffff" stroke-width="0.3" text-anchor="end" font-weight="bold" font-family="Liberation Sans" textLength="39" lengthAdjust="spacingAndGlyphs" >200厚C25砼面板</text><path d="M932.6 646.5 L994.8 646.5" stroke="#00d8e4" stroke-width="1" fill="none"/><text x="993.8" y="644.6" font-size="6.5" fill="#ffffff" stroke="#ffffff" stroke-width="0.3" text-anchor="end" font-weight="bold" font-family="Liberation Sans" textLength="31" lengthAdjust="spacingAndGlyphs" >Φ14@150双向</text><text x="935.2" y="742" font-size="8.5" fill="#ffffff" stroke="#fff" stroke-width="0.45" text-anchor="middle" font-weight="bold" font-family="Liberation Sans" textLength="93.4" lengthAdjust="spacingAndGlyphs">压花路过渡平拆-过渡部位</text><path d="M888.5 744.5 L981.9 744.5" stroke="#ffffff" stroke-width="1" fill="none"/><path d="M1110 140 L1117.5 133 L1125 140 L1123 140 L1123 147 L1112 147 L1112 140Z" fill="#2e353e"/><circle cx="1181" cy="207" r="54" fill="none" stroke="#4b5158" stroke-width="12"/><text x="1181" y="160" font-size="18" fill="#cfcfcf" text-anchor="middle" font-family="Liberation Serif">北</text><text x="1181" y="272" font-size="18" fill="#cfcfcf" text-anchor="middle" font-family="Liberation Serif">南</text><text x="1124.5" y="214" font-size="18" fill="#cfcfcf" text-anchor="middle" font-family="Liberation Serif">西</text><text x="1237.5" y="214" font-size="18" fill="#cfcfcf" text-anchor="middle" font-family="Liberation Serif">东</text><rect x="1155.5" y="181.5" width="51" height="51" fill="#c4c6c8" stroke="#d8d8d8" stroke-width="1"/><rect x="1165" y="191" width="32" height="32" fill="#a9adb1"/><path d="M1179 195 L1179 217 M1169 216.5 L1196 216.5 M1180 205 L1189 205" stroke="#3a3a3a" stroke-width="1.6"/><path d="M1241 267 L1249 267 L1245 272Z M1241 264 L1249 264" fill="#333a44" stroke="#333a44"/><rect x="1157.5" y="294.5" width="47" height="16" rx="4" fill="#a4a8b4" stroke="#7a7e88"/><text x="1161" y="307" font-size="11" fill="#3a3a3a" font-family="Liberation Sans">WCS</text><path d="M1191 299 L1200 299 L1195.5 305Z" fill="#e0e0e0" stroke="#777" stroke-width="0.6"/></svg>
</body></html>
